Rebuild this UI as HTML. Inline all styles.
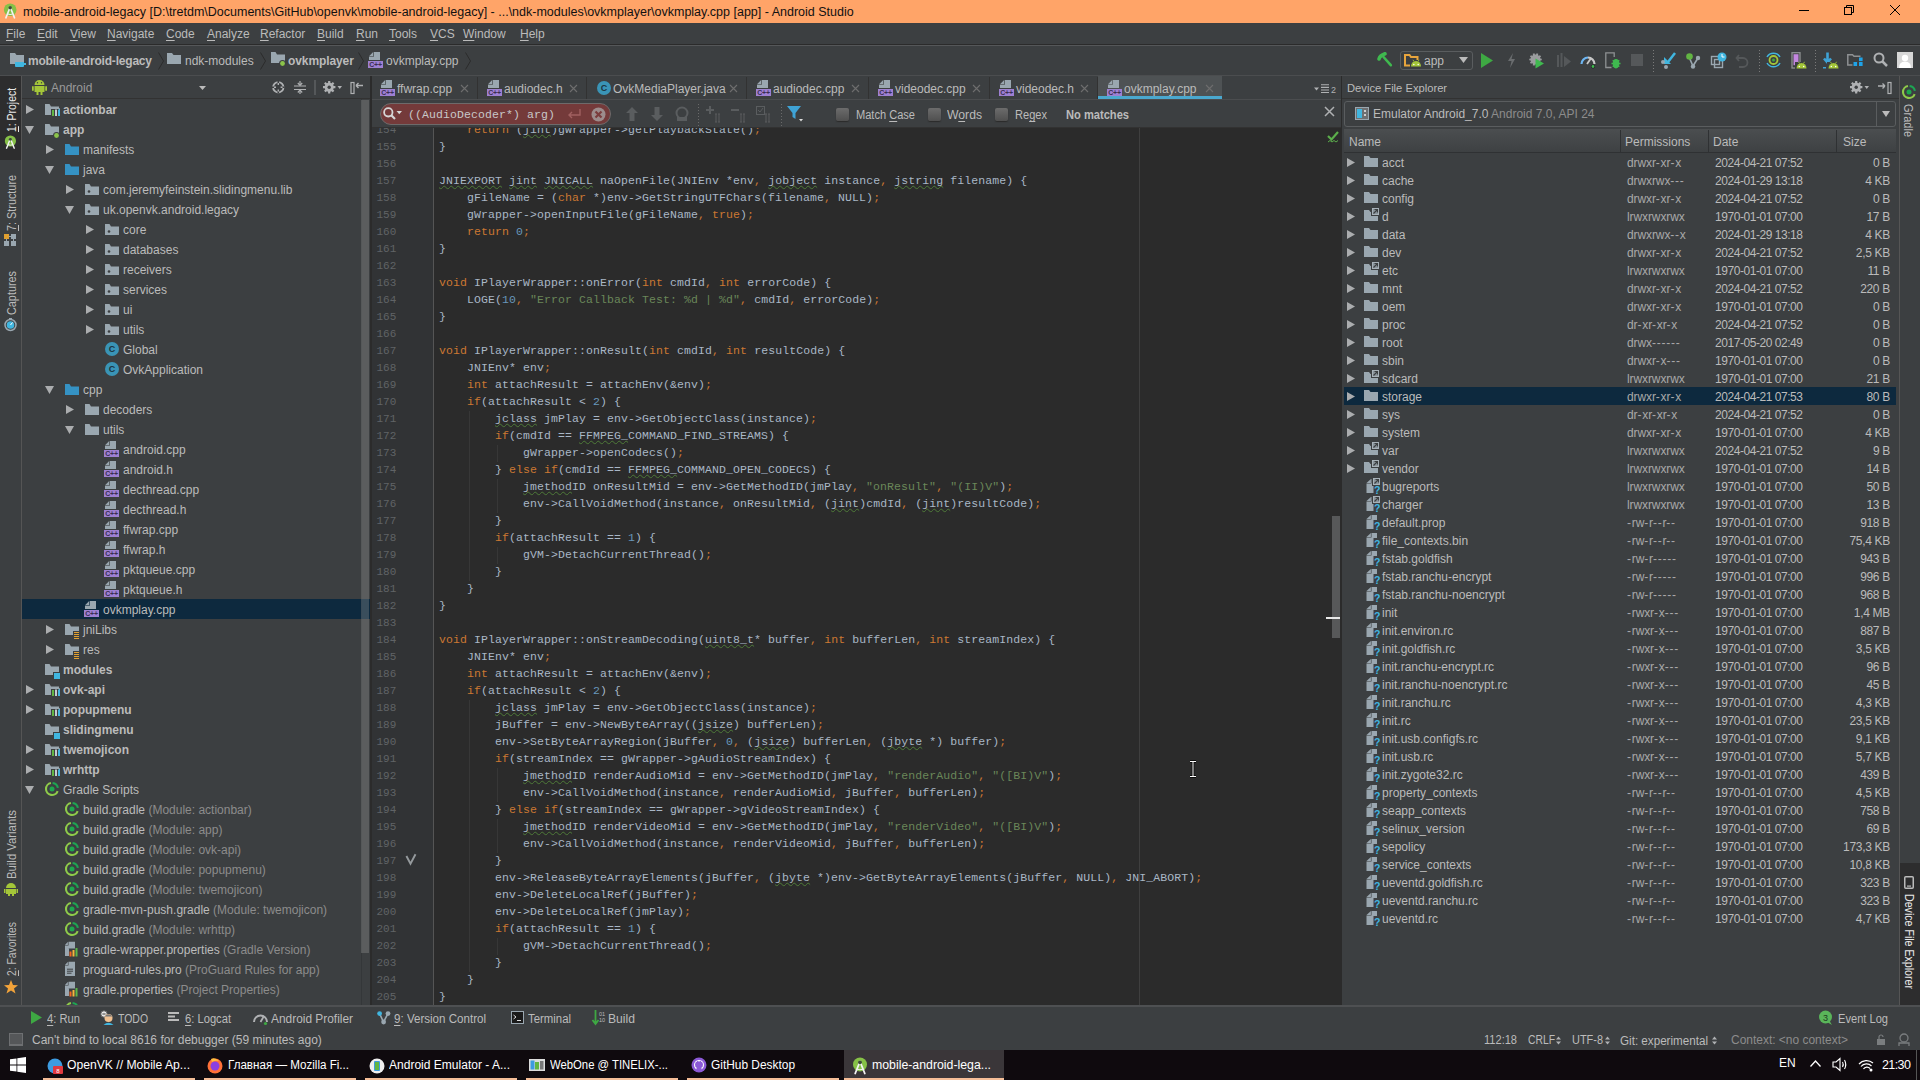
<!DOCTYPE html><html><head><meta charset="utf-8"><title>Android Studio</title><style>
*{box-sizing:border-box;margin:0;padding:0}
html,body{width:1920px;height:1080px;overflow:hidden;background:#3C3F41;font-family:"Liberation Sans",sans-serif;font-size:12px;color:#BBBBBB}
.a{position:absolute}
.t{position:absolute;white-space:nowrap;line-height:14px}
.u{text-decoration:underline;text-underline-offset:2px}
svg{position:absolute;overflow:visible}
</style></head><body>
<div class="a" style="left:0;top:0;width:1920px;height:23px;background:#FFA468"></div>
<svg style="left:3px;top:3px" width="14.4" height="16.2" viewBox="0 0 16 18"><circle cx="8" cy="7.5" r="7" fill="#86C147"/><path d="M8 4.5 L3.2 16.5 M8 4.5 L12.8 16.5" stroke="#F2F2F2" stroke-width="1.8" stroke-linecap="round"/><path d="M5 12 Q8 13.5 11 12" stroke="#F2F2F2" stroke-width="1.2" fill="none"/><circle cx="8" cy="5.3" r="1.9" fill="#3E4A3A"/></svg>
<div class="t" style="left:23px;top:5px;color:#111;font-size:12.5px">mobile-android-legacy [D:\tretdm\Documents\GitHub\openvk\mobile-android-legacy] - ...\ndk-modules\ovkmplayer\ovkmplay.cpp [app] - Android Studio</div>
<div class="a" style="left:1799px;top:10px;width:10px;height:1px;background:#000"></div>
<svg style="left:1844px;top:5px" width="10" height="10" viewBox="0 0 10 10"><rect x="0.5" y="2.5" width="7" height="7" fill="none" stroke="#000"/><path d="M2.5 2.5 V0.5 H9.5 V7.5 H7.5" fill="none" stroke="#000"/></svg>
<svg style="left:1890px;top:5px" width="10" height="10" viewBox="0 0 10 10"><path d="M0 0 L10 10 M10 0 L0 10" stroke="#000" stroke-width="1"/></svg>
<div class="a" style="left:0;top:23px;width:1920px;height:22px;background:#3C3F41;border-bottom:1px solid #2B2B2B"></div>
<div class="t" style="left:6px;top:27px;color:#BBBBBB"><span class="u">F</span>ile</div>
<div class="t" style="left:37px;top:27px;color:#BBBBBB"><span class="u">E</span>dit</div>
<div class="t" style="left:70px;top:27px;color:#BBBBBB"><span class="u">V</span>iew</div>
<div class="t" style="left:107px;top:27px;color:#BBBBBB"><span class="u">N</span>avigate</div>
<div class="t" style="left:166px;top:27px;color:#BBBBBB"><span class="u">C</span>ode</div>
<div class="t" style="left:207px;top:27px;color:#BBBBBB"><span class="u">A</span>nalyze</div>
<div class="t" style="left:260px;top:27px;color:#BBBBBB"><span class="u">R</span>efactor</div>
<div class="t" style="left:317px;top:27px;color:#BBBBBB"><span class="u">B</span>uild</div>
<div class="t" style="left:356px;top:27px;color:#BBBBBB"><span class="u">R</span>un</div>
<div class="t" style="left:389px;top:27px;color:#BBBBBB"><span class="u">T</span>ools</div>
<div class="t" style="left:430px;top:27px;color:#BBBBBB"><span class="u">V</span>CS</div>
<div class="t" style="left:463px;top:27px;color:#BBBBBB"><span class="u">W</span>indow</div>
<div class="t" style="left:520px;top:27px;color:#BBBBBB"><span class="u">H</span>elp</div>
<div class="a" style="left:0;top:45px;width:1920px;height:31px;background:#3C3F41;border-top:1px solid #555759;border-bottom:1px solid #4B4D4F"></div>
<div class="a" style="left:0;top:76px;width:22px;height:930px;background:#3C3F41;border-right:1px solid #555555"></div>
<div class="a" style="left:0;top:76px;width:21px;height:84px;background:#2D2D2E"></div>
<div class="t" style="left:5px;top:131.5px;color:#E8E8E8;font-size:12px;transform-origin:0 0;transform:rotate(-90deg) scaleX(0.8683)"><span class="u">1</span>: Project</div>
<svg style="left:4px;top:135px" width="12.8" height="14.4" viewBox="0 0 16 18"><circle cx="8" cy="7.5" r="7" fill="#86C147"/><path d="M8 4.5 L3.2 16.5 M8 4.5 L12.8 16.5" stroke="#F2F2F2" stroke-width="1.8" stroke-linecap="round"/><path d="M5 12 Q8 13.5 11 12" stroke="#F2F2F2" stroke-width="1.2" fill="none"/><circle cx="8" cy="5.3" r="1.9" fill="#3E4A3A"/></svg>
<div class="t" style="left:5px;top:230.5px;color:#BBBBBB;font-size:12px;transform-origin:0 0;transform:rotate(-90deg) scaleX(0.9032)"><span class="u">7</span>: Structure</div>
<svg style="left:4px;top:234px" width="13" height="12" viewBox="0 0 13 12"><rect x="0" y="0" width="5" height="5" fill="#E0A030"/><rect x="7" y="0" width="5" height="5" fill="#9AA7B0"/><rect x="0" y="7" width="5" height="5" fill="#9AA7B0"/><rect x="7" y="7" width="5" height="5" fill="#9AA7B0"/><path d="M5 2.5 H7 M2.5 5 V7 M9.5 5 V7" stroke="#9AA7B0"/></svg>
<div class="t" style="left:5px;top:314.5px;color:#BBBBBB;font-size:12px;transform-origin:0 0;transform:rotate(-90deg) scaleX(0.9037)">Captures</div>
<svg style="left:4px;top:318px" width="13" height="13" viewBox="0 0 13 13"><circle cx="6.5" cy="7" r="5.5" fill="none" stroke="#9AA7B0" stroke-width="1.5"/><circle cx="6.5" cy="7" r="3.8" fill="#40B6E0"/><path d="M6.5 7 L8.5 4.5" stroke="#fff" stroke-width="1"/><rect x="5" y="0" width="3" height="1.5" fill="#9AA7B0"/></svg>
<div class="t" style="left:5px;top:878.5px;color:#BBBBBB;font-size:12px;transform-origin:0 0;transform:rotate(-90deg) scaleX(0.9434)">Build Variants</div>
<svg style="left:4px;top:882px" width="14" height="14" viewBox="0 0 14 14"><path d="M2 6 A5 5 0 0 1 12 6Z" fill="#A4C639"/><rect x="2" y="7" width="10" height="5" fill="#A4C639"/><rect x="0" y="7" width="1.5" height="4" fill="#A4C639"/><rect x="12.5" y="7" width="1.5" height="4" fill="#A4C639"/><rect x="4" y="12" width="2" height="2" fill="#A4C639"/><rect x="8" y="12" width="2" height="2" fill="#A4C639"/></svg>
<div class="t" style="left:5px;top:975.5px;color:#BBBBBB;font-size:12px;transform-origin:0 0;transform:rotate(-90deg) scaleX(0.8616)"><span class="u">2</span>: Favorites</div>
<svg style="left:4px;top:980px" width="14" height="14" viewBox="0 0 14 14"><path d="M7 0 L9 5 L14 5.2 L10 8.5 L11.5 13.5 L7 10.5 L2.5 13.5 L4 8.5 L0 5.2 L5 5Z" fill="#F2A33A"/></svg>
<div class="a" style="left:1899px;top:76px;width:21px;height:930px;background:#3C3F41;border-left:1px solid #555555"></div>
<div class="a" style="left:1900px;top:863px;width:20px;height:142px;background:#2D2D2E"></div>
<svg style="left:1901px;top:84px" width="16" height="16" viewBox="0 0 16 16"><path d="M8.6 2.03 A6 6 0 0 1 13.9 6.9" fill="none" stroke="#1DA553" stroke-width="2.1"/><path d="M13.64 10.05 A6 6 0 1 1 6.96 2.09" fill="none" stroke="#8FCB4A" stroke-width="2.1"/><circle cx="8" cy="8" r="2.5" fill="#1EA84E"/></svg>
<div class="t" style="left:1915px;top:103.5px;color:#BBBBBB;font-size:12px;transform-origin:0 0;transform:rotate(90deg) scaleX(0.9163)">Gradle</div>
<svg style="left:1904px;top:876px" width="10" height="13" viewBox="0 0 10 13"><rect x="0.75" y="0.75" width="8.5" height="11.5" rx="1" fill="none" stroke="#BBBBBB" stroke-width="1.5"/><rect x="3" y="9.5" width="4" height="1.2" fill="#BBBBBB"/></svg>
<div class="t" style="left:1916px;top:893.5px;color:#E8E8E8;font-size:12px;transform-origin:0 0;transform:rotate(90deg) scaleX(0.8847)">Device File Explorer</div>
<div class="a" style="left:22px;top:76px;width:348px;height:930px;background:#3C3F41"></div>
<div class="a" style="left:22px;top:76px;width:348px;height:23px;background:#3C3F41;border-bottom:1px solid #323232"></div>
<svg style="left:32px;top:79px" width="15" height="16" viewBox="0 0 15 16"><path d="M2.5 6 A5 5 0 0 1 12.5 6Z" fill="#A4C639"/><rect x="2.5" y="7" width="10" height="6" fill="#A4C639"/><rect x="0" y="7" width="1.8" height="5" rx="0.9" fill="#A4C639"/><rect x="13.2" y="7" width="1.8" height="5" rx="0.9" fill="#A4C639"/><rect x="4.5" y="13" width="2" height="3" fill="#A4C639"/><rect x="8.5" y="13" width="2" height="3" fill="#A4C639"/><circle cx="5.5" cy="3.8" r="0.7" fill="#3C3F41"/><circle cx="9.5" cy="3.8" r="0.7" fill="#3C3F41"/></svg>
<div class="t" style="left:51px;top:81px;color:#9A9A9A">Android</div>
<svg style="left:199px;top:86px" width="7" height="4" viewBox="0 0 7 4"><path d="M0 0 H7 L3.5 4Z" fill="#BBBBBB"/></svg>
<svg style="left:272px;top:81px" width="13" height="13" viewBox="0 0 13 13"><circle cx="6.3" cy="6.3" r="5.2" fill="none" stroke="#AFB1B3" stroke-width="1.8"/><path d="M6.3 0 V3 M6.3 9.6 V12.6 M0 6.3 H3 M9.6 6.3 H12.6" stroke="#3C3F41" stroke-width="1.6"/><path d="M6.3 2 V4 M6.3 8.6 V10.6 M2 6.3 H4 M8.6 6.3 H10.6" stroke="#AFB1B3" stroke-width="1.4"/></svg>
<svg style="left:294px;top:81px" width="12" height="13" viewBox="0 0 12 13"><path d="M0 5 H12 M0 8.5 H12" stroke="#AFB1B3" stroke-width="1.2"/><path d="M6 0 V4 M6 9.5 V13" stroke="#AFB1B3" stroke-width="1.2"/><path d="M3.8 2 L6 4.3 L8.2 2 M3.8 11.5 L6 9.2 L8.2 11.5" stroke="#AFB1B3" stroke-width="1.2" fill="none"/></svg>
<div class="a" style="left:314px;top:80px;width:2px;height:15px;background:#55585A"></div>
<svg style="left:323px;top:81px" width="20" height="13" viewBox="0 0 20 13"><path d="M12.41 5.12 L12.41 7.28 L10.66 7.34 L10.16 8.54 L11.35 9.82 L9.82 11.35 L8.54 10.16 L7.34 10.66 L7.28 12.41 L5.12 12.41 L5.06 10.66 L3.86 10.16 L2.58 11.35 L1.05 9.82 L2.24 8.54 L1.74 7.34 L-0.01 7.28 L-0.01 5.12 L1.74 5.06 L2.24 3.86 L1.05 2.58 L2.58 1.05 L3.86 2.24 L5.06 1.74 L5.12 -0.01 L7.28 -0.01 L7.34 1.74 L8.54 2.24 L9.82 1.05 L11.35 2.58 L10.16 3.86 L10.66 5.06Z" fill="#AFB1B3"/><circle cx="6.2" cy="6.2" r="1.7" fill="#3C3F41"/><path d="M14.5 5 H19 L16.75 8Z" fill="#AFB1B3"/></svg>
<svg style="left:350px;top:82px" width="14" height="12" viewBox="0 0 14 12"><rect x="1" y="0.5" width="3" height="11" fill="none" stroke="#AFB1B3" stroke-width="1.2"/><path d="M6 3.5 H13 M6 3.5 L8.5 1 M6 3.5 L8.5 6" stroke="#AFB1B3" stroke-width="1.4" fill="none"/></svg>
<div class="a" style="left:22px;top:99px;width:348px;height:907px;overflow:hidden">
<svg style="left:4px;top:6px" width="8" height="9" viewBox="0 0 8 9"><path d="M0 0 L8 4.5 L0 9Z" fill="#ABADAF"/></svg>
<svg style="left:22px;top:4px" width="16" height="16" viewBox="0 0 16 16"><path d="M1 1 H5.5 L7 3.5 H15 V12 H1Z" fill="#9AA7B0"/><rect x="7" y="5" width="10" height="11" fill="#3C3F41"/><path d="M7 5.5 H15.5 V7" stroke="#9AA7B0" fill="none"/><rect x="8" y="7" width="2" height="6" fill="#62B543"/><rect x="11" y="6.5" width="2" height="6.5" fill="#C5CDD3"/><rect x="14" y="6.5" width="2" height="6.5" fill="#40B6E0"/></svg>
<div class="t" style="left:41px;top:4px;font-weight:bold;color:#BBBBBB">actionbar</div>
<svg style="left:3px;top:27px" width="9" height="8" viewBox="0 0 9 8"><path d="M0 0 L9 0 L4.5 8Z" fill="#ABADAF"/></svg>
<svg style="left:22px;top:24px" width="16" height="16" viewBox="0 0 16 16"><path d="M1 1 H5.5 L7 3.5 H15 V12 H1Z" fill="#9AA7B0"/><circle cx="12.5" cy="12.5" r="3.5" fill="#3C3F41"/><circle cx="12.5" cy="12.5" r="2.4" fill="#8BC34A"/></svg>
<div class="t" style="left:41px;top:24px;font-weight:bold;color:#BBBBBB">app</div>
<svg style="left:24px;top:46px" width="8" height="9" viewBox="0 0 8 9"><path d="M0 0 L8 4.5 L0 9Z" fill="#ABADAF"/></svg>
<svg style="left:42px;top:44px" width="16" height="16" viewBox="0 0 16 16"><path d="M1 1 H5.5 L7 3.5 H15 V12 H1Z" fill="#3592C4"/></svg>
<div class="t" style="left:61px;top:44px;font-weight:normal;color:#BBBBBB">manifests</div>
<svg style="left:23px;top:67px" width="9" height="8" viewBox="0 0 9 8"><path d="M0 0 L9 0 L4.5 8Z" fill="#ABADAF"/></svg>
<svg style="left:42px;top:64px" width="16" height="16" viewBox="0 0 16 16"><path d="M1 1 H5.5 L7 3.5 H15 V12 H1Z" fill="#3592C4"/></svg>
<div class="t" style="left:61px;top:64px;font-weight:normal;color:#BBBBBB">java</div>
<svg style="left:44px;top:86px" width="8" height="9" viewBox="0 0 8 9"><path d="M0 0 L8 4.5 L0 9Z" fill="#ABADAF"/></svg>
<svg style="left:62px;top:84px" width="16" height="16" viewBox="0 0 16 16"><path d="M1 1 H5.5 L7 3.5 H15 V12 H1Z" fill="#9AA7B0"/><circle cx="5" cy="8.5" r="1.3" fill="#3C3F41"/></svg>
<div class="t" style="left:81px;top:84px;font-weight:normal;color:#BBBBBB">com.jeremyfeinstein.slidingmenu.lib</div>
<svg style="left:43px;top:107px" width="9" height="8" viewBox="0 0 9 8"><path d="M0 0 L9 0 L4.5 8Z" fill="#ABADAF"/></svg>
<svg style="left:62px;top:104px" width="16" height="16" viewBox="0 0 16 16"><path d="M1 1 H5.5 L7 3.5 H15 V12 H1Z" fill="#9AA7B0"/><circle cx="5" cy="8.5" r="1.3" fill="#3C3F41"/></svg>
<div class="t" style="left:81px;top:104px;font-weight:normal;color:#BBBBBB">uk.openvk.android.legacy</div>
<svg style="left:64px;top:126px" width="8" height="9" viewBox="0 0 8 9"><path d="M0 0 L8 4.5 L0 9Z" fill="#ABADAF"/></svg>
<svg style="left:82px;top:124px" width="16" height="16" viewBox="0 0 16 16"><path d="M1 1 H5.5 L7 3.5 H15 V12 H1Z" fill="#9AA7B0"/><circle cx="5" cy="8.5" r="1.3" fill="#3C3F41"/></svg>
<div class="t" style="left:101px;top:124px;font-weight:normal;color:#BBBBBB">core</div>
<svg style="left:64px;top:146px" width="8" height="9" viewBox="0 0 8 9"><path d="M0 0 L8 4.5 L0 9Z" fill="#ABADAF"/></svg>
<svg style="left:82px;top:144px" width="16" height="16" viewBox="0 0 16 16"><path d="M1 1 H5.5 L7 3.5 H15 V12 H1Z" fill="#9AA7B0"/><circle cx="5" cy="8.5" r="1.3" fill="#3C3F41"/></svg>
<div class="t" style="left:101px;top:144px;font-weight:normal;color:#BBBBBB">databases</div>
<svg style="left:64px;top:166px" width="8" height="9" viewBox="0 0 8 9"><path d="M0 0 L8 4.5 L0 9Z" fill="#ABADAF"/></svg>
<svg style="left:82px;top:164px" width="16" height="16" viewBox="0 0 16 16"><path d="M1 1 H5.5 L7 3.5 H15 V12 H1Z" fill="#9AA7B0"/><circle cx="5" cy="8.5" r="1.3" fill="#3C3F41"/></svg>
<div class="t" style="left:101px;top:164px;font-weight:normal;color:#BBBBBB">receivers</div>
<svg style="left:64px;top:186px" width="8" height="9" viewBox="0 0 8 9"><path d="M0 0 L8 4.5 L0 9Z" fill="#ABADAF"/></svg>
<svg style="left:82px;top:184px" width="16" height="16" viewBox="0 0 16 16"><path d="M1 1 H5.5 L7 3.5 H15 V12 H1Z" fill="#9AA7B0"/><circle cx="5" cy="8.5" r="1.3" fill="#3C3F41"/></svg>
<div class="t" style="left:101px;top:184px;font-weight:normal;color:#BBBBBB">services</div>
<svg style="left:64px;top:206px" width="8" height="9" viewBox="0 0 8 9"><path d="M0 0 L8 4.5 L0 9Z" fill="#ABADAF"/></svg>
<svg style="left:82px;top:204px" width="16" height="16" viewBox="0 0 16 16"><path d="M1 1 H5.5 L7 3.5 H15 V12 H1Z" fill="#9AA7B0"/><circle cx="5" cy="8.5" r="1.3" fill="#3C3F41"/></svg>
<div class="t" style="left:101px;top:204px;font-weight:normal;color:#BBBBBB">ui</div>
<svg style="left:64px;top:226px" width="8" height="9" viewBox="0 0 8 9"><path d="M0 0 L8 4.5 L0 9Z" fill="#ABADAF"/></svg>
<svg style="left:82px;top:224px" width="16" height="16" viewBox="0 0 16 16"><path d="M1 1 H5.5 L7 3.5 H15 V12 H1Z" fill="#9AA7B0"/><circle cx="5" cy="8.5" r="1.3" fill="#3C3F41"/></svg>
<div class="t" style="left:101px;top:224px;font-weight:normal;color:#BBBBBB">utils</div>
<svg style="left:82px;top:242px" width="16" height="16" viewBox="0 0 16 16"><circle cx="8" cy="8" r="7" fill="#3A94B6"/><text x="8" y="11.4" font-family="Liberation Sans" font-size="9" font-weight="bold" fill="#1C3540" text-anchor="middle">C</text></svg>
<div class="t" style="left:101px;top:244px;font-weight:normal;color:#BBBBBB">Global</div>
<svg style="left:82px;top:262px" width="16" height="16" viewBox="0 0 16 16"><circle cx="8" cy="8" r="7" fill="#3A94B6"/><text x="8" y="11.4" font-family="Liberation Sans" font-size="9" font-weight="bold" fill="#1C3540" text-anchor="middle">C</text></svg>
<div class="t" style="left:101px;top:264px;font-weight:normal;color:#BBBBBB">OvkApplication</div>
<svg style="left:23px;top:287px" width="9" height="8" viewBox="0 0 9 8"><path d="M0 0 L9 0 L4.5 8Z" fill="#ABADAF"/></svg>
<svg style="left:42px;top:284px" width="16" height="16" viewBox="0 0 16 16"><path d="M1 1 H5.5 L7 3.5 H15 V12 H1Z" fill="#3592C4"/></svg>
<div class="t" style="left:61px;top:284px;font-weight:normal;color:#BBBBBB">cpp</div>
<svg style="left:44px;top:306px" width="8" height="9" viewBox="0 0 8 9"><path d="M0 0 L8 4.5 L0 9Z" fill="#ABADAF"/></svg>
<svg style="left:62px;top:304px" width="16" height="16" viewBox="0 0 16 16"><path d="M1 1 H5.5 L7 3.5 H15 V12 H1Z" fill="#9AA7B0"/></svg>
<div class="t" style="left:81px;top:304px;font-weight:normal;color:#BBBBBB">decoders</div>
<svg style="left:43px;top:327px" width="9" height="8" viewBox="0 0 9 8"><path d="M0 0 L9 0 L4.5 8Z" fill="#ABADAF"/></svg>
<svg style="left:62px;top:324px" width="16" height="16" viewBox="0 0 16 16"><path d="M1 1 H5.5 L7 3.5 H15 V12 H1Z" fill="#9AA7B0"/></svg>
<div class="t" style="left:81px;top:324px;font-weight:normal;color:#BBBBBB">utils</div>
<svg style="left:82px;top:342px" width="16" height="16" viewBox="0 0 16 16"><path d="M5.8 0 H12 V8 H1 V4.8 H5.8Z" fill="#9AA7B0"/><path d="M1 4.2 L5.2 0 V4.2Z" fill="#9AA7B0"/><rect x="0" y="9" width="15" height="7" fill="#9E80D2"/><text x="7.6" y="15.2" font-family="Liberation Sans" font-size="7" fill="#3B2E52" text-anchor="middle" font-weight="bold" letter-spacing="-0.2">C++</text></svg>
<div class="t" style="left:101px;top:344px;font-weight:normal;color:#BBBBBB">android.cpp</div>
<svg style="left:82px;top:362px" width="16" height="16" viewBox="0 0 16 16"><path d="M5.8 0 H12 V8 H1 V4.8 H5.8Z" fill="#9AA7B0"/><path d="M1 4.2 L5.2 0 V4.2Z" fill="#9AA7B0"/><rect x="0" y="9" width="15" height="7" fill="#9E80D2"/><text x="7.6" y="15.2" font-family="Liberation Sans" font-size="7" fill="#3B2E52" text-anchor="middle" font-weight="bold" letter-spacing="-0.2">C++</text></svg>
<div class="t" style="left:101px;top:364px;font-weight:normal;color:#BBBBBB">android.h</div>
<svg style="left:82px;top:382px" width="16" height="16" viewBox="0 0 16 16"><path d="M5.8 0 H12 V8 H1 V4.8 H5.8Z" fill="#9AA7B0"/><path d="M1 4.2 L5.2 0 V4.2Z" fill="#9AA7B0"/><rect x="0" y="9" width="15" height="7" fill="#9E80D2"/><text x="7.6" y="15.2" font-family="Liberation Sans" font-size="7" fill="#3B2E52" text-anchor="middle" font-weight="bold" letter-spacing="-0.2">C++</text></svg>
<div class="t" style="left:101px;top:384px;font-weight:normal;color:#BBBBBB">decthread.cpp</div>
<svg style="left:82px;top:402px" width="16" height="16" viewBox="0 0 16 16"><path d="M5.8 0 H12 V8 H1 V4.8 H5.8Z" fill="#9AA7B0"/><path d="M1 4.2 L5.2 0 V4.2Z" fill="#9AA7B0"/><rect x="0" y="9" width="15" height="7" fill="#9E80D2"/><text x="7.6" y="15.2" font-family="Liberation Sans" font-size="7" fill="#3B2E52" text-anchor="middle" font-weight="bold" letter-spacing="-0.2">C++</text></svg>
<div class="t" style="left:101px;top:404px;font-weight:normal;color:#BBBBBB">decthread.h</div>
<svg style="left:82px;top:422px" width="16" height="16" viewBox="0 0 16 16"><path d="M5.8 0 H12 V8 H1 V4.8 H5.8Z" fill="#9AA7B0"/><path d="M1 4.2 L5.2 0 V4.2Z" fill="#9AA7B0"/><rect x="0" y="9" width="15" height="7" fill="#9E80D2"/><text x="7.6" y="15.2" font-family="Liberation Sans" font-size="7" fill="#3B2E52" text-anchor="middle" font-weight="bold" letter-spacing="-0.2">C++</text></svg>
<div class="t" style="left:101px;top:424px;font-weight:normal;color:#BBBBBB">ffwrap.cpp</div>
<svg style="left:82px;top:442px" width="16" height="16" viewBox="0 0 16 16"><path d="M5.8 0 H12 V8 H1 V4.8 H5.8Z" fill="#9AA7B0"/><path d="M1 4.2 L5.2 0 V4.2Z" fill="#9AA7B0"/><rect x="0" y="9" width="15" height="7" fill="#9E80D2"/><text x="7.6" y="15.2" font-family="Liberation Sans" font-size="7" fill="#3B2E52" text-anchor="middle" font-weight="bold" letter-spacing="-0.2">C++</text></svg>
<div class="t" style="left:101px;top:444px;font-weight:normal;color:#BBBBBB">ffwrap.h</div>
<svg style="left:82px;top:462px" width="16" height="16" viewBox="0 0 16 16"><path d="M5.8 0 H12 V8 H1 V4.8 H5.8Z" fill="#9AA7B0"/><path d="M1 4.2 L5.2 0 V4.2Z" fill="#9AA7B0"/><rect x="0" y="9" width="15" height="7" fill="#9E80D2"/><text x="7.6" y="15.2" font-family="Liberation Sans" font-size="7" fill="#3B2E52" text-anchor="middle" font-weight="bold" letter-spacing="-0.2">C++</text></svg>
<div class="t" style="left:101px;top:464px;font-weight:normal;color:#BBBBBB">pktqueue.cpp</div>
<svg style="left:82px;top:482px" width="16" height="16" viewBox="0 0 16 16"><path d="M5.8 0 H12 V8 H1 V4.8 H5.8Z" fill="#9AA7B0"/><path d="M1 4.2 L5.2 0 V4.2Z" fill="#9AA7B0"/><rect x="0" y="9" width="15" height="7" fill="#9E80D2"/><text x="7.6" y="15.2" font-family="Liberation Sans" font-size="7" fill="#3B2E52" text-anchor="middle" font-weight="bold" letter-spacing="-0.2">C++</text></svg>
<div class="t" style="left:101px;top:484px;font-weight:normal;color:#BBBBBB">pktqueue.h</div>
<div class="a" style="left:0;top:500px;width:348px;height:20px;background:#0D293E"></div>
<svg style="left:62px;top:502px" width="16" height="16" viewBox="0 0 16 16"><path d="M5.8 0 H12 V8 H1 V4.8 H5.8Z" fill="#9AA7B0"/><path d="M1 4.2 L5.2 0 V4.2Z" fill="#9AA7B0"/><rect x="0" y="9" width="15" height="7" fill="#9E80D2"/><text x="7.6" y="15.2" font-family="Liberation Sans" font-size="7" fill="#3B2E52" text-anchor="middle" font-weight="bold" letter-spacing="-0.2">C++</text></svg>
<div class="t" style="left:81px;top:504px;font-weight:normal;color:#BBBBBB">ovkmplay.cpp</div>
<svg style="left:24px;top:526px" width="8" height="9" viewBox="0 0 8 9"><path d="M0 0 L8 4.5 L0 9Z" fill="#ABADAF"/></svg>
<svg style="left:42px;top:524px" width="16" height="16" viewBox="0 0 16 16"><path d="M1 1 H5.5 L7 3.5 H15 V12 H1Z" fill="#9AA7B0"/><rect x="9" y="8" width="7" height="8" fill="#3C3F41"/><path d="M10 9.5h5M10 11.5h5M10 13.5h5M10 15.5h5" stroke="#E0A030" stroke-width="1"/></svg>
<div class="t" style="left:61px;top:524px;font-weight:normal;color:#BBBBBB">jniLibs</div>
<svg style="left:24px;top:546px" width="8" height="9" viewBox="0 0 8 9"><path d="M0 0 L8 4.5 L0 9Z" fill="#ABADAF"/></svg>
<svg style="left:42px;top:544px" width="16" height="16" viewBox="0 0 16 16"><path d="M1 1 H5.5 L7 3.5 H15 V12 H1Z" fill="#9AA7B0"/><rect x="9" y="8" width="7" height="8" fill="#3C3F41"/><path d="M10 9.5h5M10 11.5h5M10 13.5h5M10 15.5h5" stroke="#E0A030" stroke-width="1"/></svg>
<div class="t" style="left:61px;top:544px;font-weight:normal;color:#BBBBBB">res</div>
<svg style="left:22px;top:564px" width="16" height="16" viewBox="0 0 16 16"><path d="M1 1 H5.5 L7 3.5 H15 V12 H1Z" fill="#9AA7B0"/><rect x="9" y="9" width="7" height="7" fill="#3C3F41"/><rect x="10" y="10" width="6" height="6" fill="#40B6E0"/></svg>
<div class="t" style="left:41px;top:564px;font-weight:bold;color:#BBBBBB">modules</div>
<svg style="left:4px;top:586px" width="8" height="9" viewBox="0 0 8 9"><path d="M0 0 L8 4.5 L0 9Z" fill="#ABADAF"/></svg>
<svg style="left:22px;top:584px" width="16" height="16" viewBox="0 0 16 16"><path d="M1 1 H5.5 L7 3.5 H15 V12 H1Z" fill="#9AA7B0"/><rect x="7" y="5" width="10" height="11" fill="#3C3F41"/><path d="M7 5.5 H15.5 V7" stroke="#9AA7B0" fill="none"/><rect x="8" y="7" width="2" height="6" fill="#62B543"/><rect x="11" y="6.5" width="2" height="6.5" fill="#C5CDD3"/><rect x="14" y="6.5" width="2" height="6.5" fill="#40B6E0"/></svg>
<div class="t" style="left:41px;top:584px;font-weight:bold;color:#BBBBBB">ovk-api</div>
<svg style="left:4px;top:606px" width="8" height="9" viewBox="0 0 8 9"><path d="M0 0 L8 4.5 L0 9Z" fill="#ABADAF"/></svg>
<svg style="left:22px;top:604px" width="16" height="16" viewBox="0 0 16 16"><path d="M1 1 H5.5 L7 3.5 H15 V12 H1Z" fill="#9AA7B0"/><rect x="7" y="5" width="10" height="11" fill="#3C3F41"/><path d="M7 5.5 H15.5 V7" stroke="#9AA7B0" fill="none"/><rect x="8" y="7" width="2" height="6" fill="#62B543"/><rect x="11" y="6.5" width="2" height="6.5" fill="#C5CDD3"/><rect x="14" y="6.5" width="2" height="6.5" fill="#40B6E0"/></svg>
<div class="t" style="left:41px;top:604px;font-weight:bold;color:#BBBBBB">popupmenu</div>
<svg style="left:22px;top:624px" width="16" height="16" viewBox="0 0 16 16"><path d="M1 1 H5.5 L7 3.5 H15 V12 H1Z" fill="#9AA7B0"/><rect x="9" y="9" width="7" height="7" fill="#3C3F41"/><rect x="10" y="10" width="6" height="6" fill="#40B6E0"/></svg>
<div class="t" style="left:41px;top:624px;font-weight:bold;color:#BBBBBB">slidingmenu</div>
<svg style="left:4px;top:646px" width="8" height="9" viewBox="0 0 8 9"><path d="M0 0 L8 4.5 L0 9Z" fill="#ABADAF"/></svg>
<svg style="left:22px;top:644px" width="16" height="16" viewBox="0 0 16 16"><path d="M1 1 H5.5 L7 3.5 H15 V12 H1Z" fill="#9AA7B0"/><rect x="7" y="5" width="10" height="11" fill="#3C3F41"/><path d="M7 5.5 H15.5 V7" stroke="#9AA7B0" fill="none"/><rect x="8" y="7" width="2" height="6" fill="#62B543"/><rect x="11" y="6.5" width="2" height="6.5" fill="#C5CDD3"/><rect x="14" y="6.5" width="2" height="6.5" fill="#40B6E0"/></svg>
<div class="t" style="left:41px;top:644px;font-weight:bold;color:#BBBBBB">twemojicon</div>
<svg style="left:4px;top:666px" width="8" height="9" viewBox="0 0 8 9"><path d="M0 0 L8 4.5 L0 9Z" fill="#ABADAF"/></svg>
<svg style="left:22px;top:664px" width="16" height="16" viewBox="0 0 16 16"><path d="M1 1 H5.5 L7 3.5 H15 V12 H1Z" fill="#9AA7B0"/><rect x="7" y="5" width="10" height="11" fill="#3C3F41"/><path d="M7 5.5 H15.5 V7" stroke="#9AA7B0" fill="none"/><rect x="8" y="7" width="2" height="6" fill="#62B543"/><rect x="11" y="6.5" width="2" height="6.5" fill="#C5CDD3"/><rect x="14" y="6.5" width="2" height="6.5" fill="#40B6E0"/></svg>
<div class="t" style="left:41px;top:664px;font-weight:bold;color:#BBBBBB">wrhttp</div>
<svg style="left:3px;top:687px" width="9" height="8" viewBox="0 0 9 8"><path d="M0 0 L9 0 L4.5 8Z" fill="#ABADAF"/></svg>
<svg style="left:22px;top:682px" width="16" height="16" viewBox="0 0 16 16"><path d="M8.6 2.03 A6 6 0 0 1 13.9 6.9" fill="none" stroke="#1DA553" stroke-width="2.1"/><path d="M13.64 10.05 A6 6 0 1 1 6.96 2.09" fill="none" stroke="#8FCB4A" stroke-width="2.1"/><circle cx="8" cy="8" r="2.5" fill="#1EA84E"/></svg>
<div class="t" style="left:41px;top:684px;font-weight:normal;color:#BBBBBB">Gradle Scripts</div>
<svg style="left:42px;top:702px" width="16" height="16" viewBox="0 0 16 16"><path d="M8.6 2.03 A6 6 0 0 1 13.9 6.9" fill="none" stroke="#1DA553" stroke-width="2.1"/><path d="M13.64 10.05 A6 6 0 1 1 6.96 2.09" fill="none" stroke="#8FCB4A" stroke-width="2.1"/><circle cx="8" cy="8" r="2.5" fill="#1EA84E"/></svg>
<div class="t" style="left:61px;top:704px;font-weight:normal;color:#BBBBBB">build.gradle <span style="color:#8C8C8C">(Module: actionbar)</span></div>
<svg style="left:42px;top:722px" width="16" height="16" viewBox="0 0 16 16"><path d="M8.6 2.03 A6 6 0 0 1 13.9 6.9" fill="none" stroke="#1DA553" stroke-width="2.1"/><path d="M13.64 10.05 A6 6 0 1 1 6.96 2.09" fill="none" stroke="#8FCB4A" stroke-width="2.1"/><circle cx="8" cy="8" r="2.5" fill="#1EA84E"/></svg>
<div class="t" style="left:61px;top:724px;font-weight:normal;color:#BBBBBB">build.gradle <span style="color:#8C8C8C">(Module: app)</span></div>
<svg style="left:42px;top:742px" width="16" height="16" viewBox="0 0 16 16"><path d="M8.6 2.03 A6 6 0 0 1 13.9 6.9" fill="none" stroke="#1DA553" stroke-width="2.1"/><path d="M13.64 10.05 A6 6 0 1 1 6.96 2.09" fill="none" stroke="#8FCB4A" stroke-width="2.1"/><circle cx="8" cy="8" r="2.5" fill="#1EA84E"/></svg>
<div class="t" style="left:61px;top:744px;font-weight:normal;color:#BBBBBB">build.gradle <span style="color:#8C8C8C">(Module: ovk-api)</span></div>
<svg style="left:42px;top:762px" width="16" height="16" viewBox="0 0 16 16"><path d="M8.6 2.03 A6 6 0 0 1 13.9 6.9" fill="none" stroke="#1DA553" stroke-width="2.1"/><path d="M13.64 10.05 A6 6 0 1 1 6.96 2.09" fill="none" stroke="#8FCB4A" stroke-width="2.1"/><circle cx="8" cy="8" r="2.5" fill="#1EA84E"/></svg>
<div class="t" style="left:61px;top:764px;font-weight:normal;color:#BBBBBB">build.gradle <span style="color:#8C8C8C">(Module: popupmenu)</span></div>
<svg style="left:42px;top:782px" width="16" height="16" viewBox="0 0 16 16"><path d="M8.6 2.03 A6 6 0 0 1 13.9 6.9" fill="none" stroke="#1DA553" stroke-width="2.1"/><path d="M13.64 10.05 A6 6 0 1 1 6.96 2.09" fill="none" stroke="#8FCB4A" stroke-width="2.1"/><circle cx="8" cy="8" r="2.5" fill="#1EA84E"/></svg>
<div class="t" style="left:61px;top:784px;font-weight:normal;color:#BBBBBB">build.gradle <span style="color:#8C8C8C">(Module: twemojicon)</span></div>
<svg style="left:42px;top:802px" width="16" height="16" viewBox="0 0 16 16"><path d="M8.6 2.03 A6 6 0 0 1 13.9 6.9" fill="none" stroke="#1DA553" stroke-width="2.1"/><path d="M13.64 10.05 A6 6 0 1 1 6.96 2.09" fill="none" stroke="#8FCB4A" stroke-width="2.1"/><circle cx="8" cy="8" r="2.5" fill="#1EA84E"/></svg>
<div class="t" style="left:61px;top:804px;font-weight:normal;color:#BBBBBB">gradle-mvn-push.gradle <span style="color:#8C8C8C">(Module: twemojicon)</span></div>
<svg style="left:42px;top:822px" width="16" height="16" viewBox="0 0 16 16"><path d="M8.6 2.03 A6 6 0 0 1 13.9 6.9" fill="none" stroke="#1DA553" stroke-width="2.1"/><path d="M13.64 10.05 A6 6 0 1 1 6.96 2.09" fill="none" stroke="#8FCB4A" stroke-width="2.1"/><circle cx="8" cy="8" r="2.5" fill="#1EA84E"/></svg>
<div class="t" style="left:61px;top:824px;font-weight:normal;color:#BBBBBB">build.gradle <span style="color:#8C8C8C">(Module: wrhttp)</span></div>
<svg style="left:42px;top:842px" width="16" height="16" viewBox="0 0 16 16"><path d="M4.5 0.8 H11 V15 H1 V4.5 H4.5Z" fill="#9AA7B0"/><path d="M1 3.9 L3.9 0.8 V3.9Z" fill="#9AA7B0"/><rect x="4.5" y="7.5" width="12" height="9" fill="#3C3F41"/><rect x="5.5" y="10.5" width="2" height="5" fill="#F26522"/><rect x="8.5" y="9" width="2" height="6.5" fill="#F5B53B"/><rect x="11.5" y="7" width="2" height="8.5" fill="#5DB848"/><path d="M4.5 7.5 V15" stroke="#9AA7B0"/></svg>
<div class="t" style="left:61px;top:844px;font-weight:normal;color:#BBBBBB">gradle-wrapper.properties <span style="color:#8C8C8C">(Gradle Version)</span></div>
<svg style="left:42px;top:862px" width="16" height="16" viewBox="0 0 16 16"><path d="M4.5 0.8 H11 V15 H1 V4.5 H4.5Z" fill="#9AA7B0"/><path d="M1 3.9 L3.9 0.8 V3.9Z" fill="#9AA7B0"/><path d="M3 8.2 H9 M3 10.2 H9 M3 12.2 H7.5" stroke="#3C3F41" stroke-width="1"/></svg>
<div class="t" style="left:61px;top:864px;font-weight:normal;color:#BBBBBB">proguard-rules.pro <span style="color:#8C8C8C">(ProGuard Rules for app)</span></div>
<svg style="left:42px;top:882px" width="16" height="16" viewBox="0 0 16 16"><path d="M4.5 0.8 H11 V15 H1 V4.5 H4.5Z" fill="#9AA7B0"/><path d="M1 3.9 L3.9 0.8 V3.9Z" fill="#9AA7B0"/><rect x="4.5" y="7.5" width="12" height="9" fill="#3C3F41"/><rect x="5.5" y="10.5" width="2" height="5" fill="#F26522"/><rect x="8.5" y="9" width="2" height="6.5" fill="#F5B53B"/><rect x="11.5" y="7" width="2" height="8.5" fill="#5DB848"/><path d="M4.5 7.5 V15" stroke="#9AA7B0"/></svg>
<div class="t" style="left:61px;top:884px;font-weight:normal;color:#BBBBBB">gradle.properties <span style="color:#8C8C8C">(Project Properties)</span></div>
<svg style="left:42px;top:902px" width="16" height="16" viewBox="0 0 16 16"><path d="M8.6 2.03 A6 6 0 0 1 13.9 6.9" fill="none" stroke="#1DA553" stroke-width="2.1"/><path d="M13.64 10.05 A6 6 0 1 1 6.96 2.09" fill="none" stroke="#8FCB4A" stroke-width="2.1"/><circle cx="8" cy="8" r="2.5" fill="#1EA84E"/></svg>
<div class="t" style="left:61px;top:904px;font-weight:normal;color:#BBBBBB">local.properties <span style="color:#8C8C8C">(SDK Location)</span></div>
</div>
<div class="a" style="left:361px;top:99px;width:1px;height:907px;background:rgba(0,0,0,0.12)"></div>
<div class="a" style="left:361px;top:100px;width:8px;height:853px;background:rgba(160,160,160,0.31)"></div>
<div class="a" style="left:370px;top:76px;width:2px;height:930px;background:#2B2B2B"></div>
<div class="a" style="left:372px;top:76px;width:970px;height:24px;background:#3C3F41;border-bottom:1px solid #4B4D4F"></div>
<div class="a" style="left:477px;top:77px;width:1px;height:22px;background:#323232"></div>
<svg style="left:380px;top:80px" width="16" height="16" viewBox="0 0 16 16"><path d="M5.8 0 H12 V8 H1 V4.8 H5.8Z" fill="#9AA7B0"/><path d="M1 4.2 L5.2 0 V4.2Z" fill="#9AA7B0"/><rect x="0" y="9" width="15" height="7" fill="#9E80D2"/><text x="7.6" y="15.2" font-family="Liberation Sans" font-size="7" fill="#3B2E52" text-anchor="middle" font-weight="bold" letter-spacing="-0.2">C++</text></svg>
<div class="t" style="left:397px;top:82px;color:#BBBBBB">ffwrap.cpp</div>
<svg style="left:461px;top:85px" width="7" height="7" viewBox="0 0 7 7"><path d="M0 0 L7 7 M7 0 L0 7" stroke="#6E6E6E" stroke-width="1.1"/></svg>
<div class="a" style="left:586px;top:77px;width:1px;height:22px;background:#323232"></div>
<svg style="left:487px;top:80px" width="16" height="16" viewBox="0 0 16 16"><path d="M5.8 0 H12 V8 H1 V4.8 H5.8Z" fill="#9AA7B0"/><path d="M1 4.2 L5.2 0 V4.2Z" fill="#9AA7B0"/><rect x="0" y="9" width="15" height="7" fill="#9E80D2"/><text x="7.6" y="15.2" font-family="Liberation Sans" font-size="7" fill="#3B2E52" text-anchor="middle" font-weight="bold" letter-spacing="-0.2">C++</text></svg>
<div class="t" style="left:504px;top:82px;color:#BBBBBB">audiodec.h</div>
<svg style="left:570px;top:85px" width="7" height="7" viewBox="0 0 7 7"><path d="M0 0 L7 7 M7 0 L0 7" stroke="#6E6E6E" stroke-width="1.1"/></svg>
<div class="a" style="left:746px;top:77px;width:1px;height:22px;background:#323232"></div>
<svg style="left:596px;top:80px" width="16" height="16" viewBox="0 0 16 16"><circle cx="8" cy="8" r="7" fill="#3A94B6"/><text x="8" y="11.4" font-family="Liberation Sans" font-size="9" font-weight="bold" fill="#1C3540" text-anchor="middle">C</text></svg>
<div class="t" style="left:613px;top:82px;color:#BBBBBB">OvkMediaPlayer.java</div>
<svg style="left:730px;top:85px" width="7" height="7" viewBox="0 0 7 7"><path d="M0 0 L7 7 M7 0 L0 7" stroke="#6E6E6E" stroke-width="1.1"/></svg>
<div class="a" style="left:868px;top:77px;width:1px;height:22px;background:#323232"></div>
<svg style="left:756px;top:80px" width="16" height="16" viewBox="0 0 16 16"><path d="M5.8 0 H12 V8 H1 V4.8 H5.8Z" fill="#9AA7B0"/><path d="M1 4.2 L5.2 0 V4.2Z" fill="#9AA7B0"/><rect x="0" y="9" width="15" height="7" fill="#9E80D2"/><text x="7.6" y="15.2" font-family="Liberation Sans" font-size="7" fill="#3B2E52" text-anchor="middle" font-weight="bold" letter-spacing="-0.2">C++</text></svg>
<div class="t" style="left:773px;top:82px;color:#BBBBBB">audiodec.cpp</div>
<svg style="left:852px;top:85px" width="7" height="7" viewBox="0 0 7 7"><path d="M0 0 L7 7 M7 0 L0 7" stroke="#6E6E6E" stroke-width="1.1"/></svg>
<div class="a" style="left:989px;top:77px;width:1px;height:22px;background:#323232"></div>
<svg style="left:878px;top:80px" width="16" height="16" viewBox="0 0 16 16"><path d="M5.8 0 H12 V8 H1 V4.8 H5.8Z" fill="#9AA7B0"/><path d="M1 4.2 L5.2 0 V4.2Z" fill="#9AA7B0"/><rect x="0" y="9" width="15" height="7" fill="#9E80D2"/><text x="7.6" y="15.2" font-family="Liberation Sans" font-size="7" fill="#3B2E52" text-anchor="middle" font-weight="bold" letter-spacing="-0.2">C++</text></svg>
<div class="t" style="left:895px;top:82px;color:#BBBBBB">videodec.cpp</div>
<svg style="left:973px;top:85px" width="7" height="7" viewBox="0 0 7 7"><path d="M0 0 L7 7 M7 0 L0 7" stroke="#6E6E6E" stroke-width="1.1"/></svg>
<div class="a" style="left:1097px;top:77px;width:1px;height:22px;background:#323232"></div>
<svg style="left:999px;top:80px" width="16" height="16" viewBox="0 0 16 16"><path d="M5.8 0 H12 V8 H1 V4.8 H5.8Z" fill="#9AA7B0"/><path d="M1 4.2 L5.2 0 V4.2Z" fill="#9AA7B0"/><rect x="0" y="9" width="15" height="7" fill="#9E80D2"/><text x="7.6" y="15.2" font-family="Liberation Sans" font-size="7" fill="#3B2E52" text-anchor="middle" font-weight="bold" letter-spacing="-0.2">C++</text></svg>
<div class="t" style="left:1016px;top:82px;color:#BBBBBB">videodec.h</div>
<svg style="left:1081px;top:85px" width="7" height="7" viewBox="0 0 7 7"><path d="M0 0 L7 7 M7 0 L0 7" stroke="#6E6E6E" stroke-width="1.1"/></svg>
<div class="a" style="left:1098px;top:76px;width:124px;height:23px;background:#4E5254"></div>
<div class="a" style="left:1098px;top:96px;width:124px;height:3px;background:#4AA8CF"></div>
<svg style="left:1107px;top:80px" width="16" height="16" viewBox="0 0 16 16"><path d="M5.8 0 H12 V8 H1 V4.8 H5.8Z" fill="#9AA7B0"/><path d="M1 4.2 L5.2 0 V4.2Z" fill="#9AA7B0"/><rect x="0" y="9" width="15" height="7" fill="#9E80D2"/><text x="7.6" y="15.2" font-family="Liberation Sans" font-size="7" fill="#3B2E52" text-anchor="middle" font-weight="bold" letter-spacing="-0.2">C++</text></svg>
<div class="t" style="left:1124px;top:82px;color:#BBBBBB">ovkmplay.cpp</div>
<svg style="left:1206px;top:85px" width="7" height="7" viewBox="0 0 7 7"><path d="M0 0 L7 7 M7 0 L0 7" stroke="#6E6E6E" stroke-width="1.1"/></svg>
<svg style="left:1314px;top:84px" width="22" height="9" viewBox="0 0 22 9"><path d="M0 3.5 H5 L2.5 6.5Z" fill="#AFB1B3"/><path d="M7 0.7 H15 M7 3.4 H15 M7 6 H15 M7 8.5 H15" stroke="#AFB1B3" stroke-width="1.1"/><text x="17" y="8.5" font-family="Liberation Sans" font-size="9" fill="#AFB1B3">2</text></svg>
<div class="a" style="left:372px;top:100px;width:970px;height:28px;background:#3C3F41;border-bottom:1px solid #323232"></div>
<div class="a" style="left:380px;top:103px;width:231px;height:22px;background:#743A3A;border:1px solid #6E6A6A;border-radius:11px"></div>
<svg style="left:383px;top:107px" width="20" height="14" viewBox="0 0 20 14"><circle cx="5.3" cy="5.3" r="4.2" fill="none" stroke="#D6D6D6" stroke-width="1.8"/><path d="M8.3 8.3 L12 12" stroke="#D6D6D6" stroke-width="2.2"/><path d="M13.5 4 H19 L16.25 7.3Z" fill="#D6D6D6"/></svg>
<div class="t" style="left:408px;top:108px;font-family:'Liberation Mono',monospace;font-size:11.5px;letter-spacing:0.1px;color:#C8C8C8">((AudioDecoder*) arg)</div>
<svg style="left:567px;top:108px" width="14" height="12" viewBox="0 0 14 12"><path d="M13 1 V7 H2 M5 4 L2 7 L5 10" stroke="#A06060" stroke-width="1.4" fill="none"/></svg>
<svg style="left:591px;top:107px" width="15" height="15" viewBox="0 0 15 15"><circle cx="7.5" cy="7.5" r="7" fill="#9C8C8C"/><path d="M4.5 4.5 L10.5 10.5 M10.5 4.5 L4.5 10.5" stroke="#7A3D3D" stroke-width="2.2"/></svg>
<svg style="left:626px;top:107px" width="12" height="14" viewBox="0 0 12 14"><path d="M6 0 L12 6 H8.5 V14 H3.5 V6 H0Z" fill="#5A5D5F"/></svg>
<svg style="left:651px;top:107px" width="12" height="14" viewBox="0 0 12 14"><path d="M6 14 L12 8 H8.5 V0 H3.5 V8 H0Z" fill="#5A5D5F"/></svg>
<svg style="left:674px;top:106px" width="16" height="16" viewBox="0 0 16 16"><circle cx="8" cy="7" r="5.5" fill="none" stroke="#5A5D5F" stroke-width="2"/><rect x="3" y="11" width="10" height="4" fill="#5A5D5F"/></svg>
<svg style="left:698px;top:104px" width="1" height="22" viewBox="0 0 1 22"><path d="M0.5 0 V22" stroke="#6A6A6A" stroke-dasharray="1 2"/></svg>
<svg style="left:706px;top:106px" width="16" height="16" viewBox="0 0 16 16"><path d="M4 0 V8 M0 4 H8" stroke="#5A5D5F" stroke-width="2"/><path d="M10 8 V16 M13 8 V16 M9 8 H11 M12 8 H14 M9 16 H11 M12 16 H14" stroke="#5A5D5F" stroke-width="1"/></svg>
<svg style="left:731px;top:106px" width="16" height="16" viewBox="0 0 16 16"><path d="M0 4 H8" stroke="#5A5D5F" stroke-width="2"/><path d="M10 8 V16 M13 8 V16 M9 8 H11 M12 8 H14 M9 16 H11 M12 16 H14" stroke="#5A5D5F" stroke-width="1"/></svg>
<svg style="left:756px;top:106px" width="16" height="16" viewBox="0 0 16 16"><rect x="0.5" y="0.5" width="8" height="8" fill="none" stroke="#5A5D5F"/><path d="M2 4 L4 6 L7 2" stroke="#5A5D5F" fill="none"/><path d="M10 8 V16 M13 8 V16 M9 8 H11 M12 8 H14 M9 16 H11 M12 16 H14" stroke="#5A5D5F" stroke-width="1"/></svg>
<svg style="left:781px;top:104px" width="1" height="22" viewBox="0 0 1 22"><path d="M0.5 0 V22" stroke="#6A6A6A" stroke-dasharray="1 2"/></svg>
<svg style="left:787px;top:106px" width="16" height="16" viewBox="0 0 16 16"><path d="M0 0 H14 L8.5 7 V13 L5.5 11 V7Z" fill="#3FA3D6"/><path d="M12 13 H16 L14 15.5Z" fill="#DDDDDD"/></svg>
<div class="a" style="left:836px;top:108px;width:13px;height:13px;background:linear-gradient(#6C6C6C,#4F4F4F);border-radius:2px;box-shadow:0 1px 1px #2B2B2B"></div>
<div class="t" style="left:856px;top:108px;transform-origin:0 0;transform:scaleX(0.9216);">Match <span class="u">C</span>ase</div>
<div class="a" style="left:928px;top:108px;width:13px;height:13px;background:linear-gradient(#6C6C6C,#4F4F4F);border-radius:2px;box-shadow:0 1px 1px #2B2B2B"></div>
<div class="t" style="left:947px;top:108px;transform-origin:0 0;transform:scaleX(1.0159);">W<span class="u">o</span>rds</div>
<div class="a" style="left:995px;top:108px;width:13px;height:13px;background:linear-gradient(#6C6C6C,#4F4F4F);border-radius:2px;box-shadow:0 1px 1px #2B2B2B"></div>
<div class="t" style="left:1015px;top:108px;transform-origin:0 0;transform:scaleX(0.9225);">Re<span class="u">g</span>ex</div>
<div class="t" style="left:1066px;top:108px;font-weight:bold;transform-origin:0 0;transform:scaleX(0.9263);">No matches</div>
<svg style="left:1325px;top:107px" width="9" height="9" viewBox="0 0 9 9"><path d="M0 0 L9 9 M9 0 L0 9" stroke="#AFB1B3" stroke-width="1.5"/></svg>
<div class="a" style="left:372px;top:128px;width:970px;height:878px;background:#2B2B2B;overflow:hidden" id="ed">
<div class="a" style="left:0;top:0;width:62px;height:878px;background:#313335"></div>
<div class="a" style="left:61px;top:0;width:1px;height:878px;background:#555555"></div>
<div class="a" style="left:767px;top:0;width:1px;height:878px;background:#3F3F3F"></div>
<style>.cl{position:absolute;left:67px;white-space:pre;font-family:"Liberation Mono",monospace;font-size:11.5px;letter-spacing:0.1px;line-height:17px;height:17px;color:#A9B7C6}.k{color:#CC7832}.s{color:#6A8759}.n{color:#6897BB}.c{color:#CC7832}.w{text-decoration:underline wavy #4E7A38;text-decoration-thickness:0.8px;text-underline-offset:1px;text-decoration-skip-ink:none}.ln{position:absolute;left:0;width:24.5px;text-align:right;font-family:"Liberation Mono",monospace;font-size:11px;letter-spacing:0.1px;line-height:17px;color:#606366}</style>
<div class="ln" style="top:-6.5px">154</div>
<div class="cl" style="top:-7.5px">    <span class="k">return</span> (<span class="w">jint</span>)gWrapper-&gt;getPlaybackState()<span class="c">;</span></div>
<div class="ln" style="top:10.5px">155</div>
<div class="cl" style="top:9.5px">}</div>
<div class="ln" style="top:27.5px">156</div>
<div class="cl" style="top:26.5px"></div>
<div class="ln" style="top:44.5px">157</div>
<div class="cl" style="top:43.5px"><span class="w">JNIEXPORT</span> <span class="w">jint</span> <span class="w">JNICALL</span> naOpenFile(JNIEnv *env<span class="c">,</span> <span class="w">jobject</span> instance<span class="c">,</span> <span class="w">jstring</span> filename) {</div>
<div class="ln" style="top:61.5px">158</div>
<div class="cl" style="top:60.5px">    gFileName = (<span class="k">char</span> *)env-&gt;GetStringUTFChars(filename<span class="c">,</span> NULL)<span class="c">;</span></div>
<div class="ln" style="top:78.5px">159</div>
<div class="cl" style="top:77.5px">    gWrapper-&gt;openInputFile(gFileName<span class="c">,</span> <span class="k">true</span>)<span class="c">;</span></div>
<div class="ln" style="top:95.5px">160</div>
<div class="cl" style="top:94.5px">    <span class="k">return</span> <span class="n">0</span><span class="c">;</span></div>
<div class="ln" style="top:112.5px">161</div>
<div class="cl" style="top:111.5px">}</div>
<div class="ln" style="top:129.5px">162</div>
<div class="cl" style="top:128.5px"></div>
<div class="ln" style="top:146.5px">163</div>
<div class="cl" style="top:145.5px"><span class="k">void</span> IPlayerWrapper::onError(<span class="k">int</span> cmdId<span class="c">,</span> <span class="k">int</span> errorCode) {</div>
<div class="ln" style="top:163.5px">164</div>
<div class="cl" style="top:162.5px">    LOGE(<span class="n">10</span><span class="c">,</span> <span class="s">&quot;Error Callback Test: %d | %d&quot;</span><span class="c">,</span> cmdId<span class="c">,</span> errorCode)<span class="c">;</span></div>
<div class="ln" style="top:180.5px">165</div>
<div class="cl" style="top:179.5px">}</div>
<div class="ln" style="top:197.5px">166</div>
<div class="cl" style="top:196.5px"></div>
<div class="ln" style="top:214.5px">167</div>
<div class="cl" style="top:213.5px"><span class="k">void</span> IPlayerWrapper::onResult(<span class="k">int</span> cmdId<span class="c">,</span> <span class="k">int</span> resultCode) {</div>
<div class="ln" style="top:231.5px">168</div>
<div class="cl" style="top:230.5px">    JNIEnv* env<span class="c">;</span></div>
<div class="ln" style="top:248.5px">169</div>
<div class="cl" style="top:247.5px">    <span class="k">int</span> attachResult = attachEnv(&amp;env)<span class="c">;</span></div>
<div class="ln" style="top:265.5px">170</div>
<div class="cl" style="top:264.5px">    <span class="k">if</span>(attachResult &lt; <span class="n">2</span>) {</div>
<div class="ln" style="top:282.5px">171</div>
<div class="cl" style="top:281.5px">        <span class="w">jclass</span> jmPlay = env-&gt;GetObjectClass(instance)<span class="c">;</span></div>
<div class="ln" style="top:299.5px">172</div>
<div class="cl" style="top:298.5px">        <span class="k">if</span>(cmdId == <span class="w">FFMPEG_</span>COMMAND_FIND_STREAMS) {</div>
<div class="ln" style="top:316.5px">173</div>
<div class="cl" style="top:315.5px">            gWrapper-&gt;openCodecs()<span class="c">;</span></div>
<div class="ln" style="top:333.5px">174</div>
<div class="cl" style="top:332.5px">        } <span class="k">else</span> <span class="k">if</span>(cmdId == <span class="w">FFMPEG_</span>COMMAND_OPEN_CODECS) {</div>
<div class="ln" style="top:350.5px">175</div>
<div class="cl" style="top:349.5px">            <span class="w">jmethod</span>ID onResultMid = env-&gt;GetMethodID(jmPlay<span class="c">,</span> <span class="s">&quot;onResult&quot;</span><span class="c">,</span> <span class="s">&quot;(II)V&quot;</span>)<span class="c">;</span></div>
<div class="ln" style="top:367.5px">176</div>
<div class="cl" style="top:366.5px">            env-&gt;CallVoidMethod(instance<span class="c">,</span> onResultMid<span class="c">,</span> (<span class="w">jint</span>)cmdId<span class="c">,</span> (<span class="w">jint</span>)resultCode)<span class="c">;</span></div>
<div class="ln" style="top:384.5px">177</div>
<div class="cl" style="top:383.5px">        }</div>
<div class="ln" style="top:401.5px">178</div>
<div class="cl" style="top:400.5px">        <span class="k">if</span>(attachResult == <span class="n">1</span>) {</div>
<div class="ln" style="top:418.5px">179</div>
<div class="cl" style="top:417.5px">            gVM-&gt;DetachCurrentThread()<span class="c">;</span></div>
<div class="ln" style="top:435.5px">180</div>
<div class="cl" style="top:434.5px">        }</div>
<div class="ln" style="top:452.5px">181</div>
<div class="cl" style="top:451.5px">    }</div>
<div class="ln" style="top:469.5px">182</div>
<div class="cl" style="top:468.5px">}</div>
<div class="ln" style="top:486.5px">183</div>
<div class="cl" style="top:485.5px"></div>
<div class="ln" style="top:503.5px">184</div>
<div class="cl" style="top:502.5px"><span class="k">void</span> IPlayerWrapper::onStreamDecoding(<span class="w">uint8_t</span>* buffer<span class="c">,</span> <span class="k">int</span> bufferLen<span class="c">,</span> <span class="k">int</span> streamIndex) {</div>
<div class="ln" style="top:520.5px">185</div>
<div class="cl" style="top:519.5px">    JNIEnv* env<span class="c">;</span></div>
<div class="ln" style="top:537.5px">186</div>
<div class="cl" style="top:536.5px">    <span class="k">int</span> attachResult = attachEnv(&amp;env)<span class="c">;</span></div>
<div class="ln" style="top:554.5px">187</div>
<div class="cl" style="top:553.5px">    <span class="k">if</span>(attachResult &lt; <span class="n">2</span>) {</div>
<div class="ln" style="top:571.5px">188</div>
<div class="cl" style="top:570.5px">        <span class="w">jclass</span> jmPlay = env-&gt;GetObjectClass(instance)<span class="c">;</span></div>
<div class="ln" style="top:588.5px">189</div>
<div class="cl" style="top:587.5px">        jBuffer = env-&gt;NewByteArray((<span class="w">jsize</span>) bufferLen)<span class="c">;</span></div>
<div class="ln" style="top:605.5px">190</div>
<div class="cl" style="top:604.5px">        env-&gt;SetByteArrayRegion(jBuffer<span class="c">,</span> <span class="n">0</span><span class="c">,</span> (<span class="w">jsize</span>) bufferLen<span class="c">,</span> (<span class="w">jbyte</span> *) buffer)<span class="c">;</span></div>
<div class="ln" style="top:622.5px">191</div>
<div class="cl" style="top:621.5px">        <span class="k">if</span>(streamIndex == gWrapper-&gt;gAudioStreamIndex) {</div>
<div class="ln" style="top:639.5px">192</div>
<div class="cl" style="top:638.5px">            <span class="w">jmethod</span>ID renderAudioMid = env-&gt;GetMethodID(jmPlay<span class="c">,</span> <span class="s">&quot;renderAudio&quot;</span><span class="c">,</span> <span class="s">&quot;([BI)V&quot;</span>)<span class="c">;</span></div>
<div class="ln" style="top:656.5px">193</div>
<div class="cl" style="top:655.5px">            env-&gt;CallVoidMethod(instance<span class="c">,</span> renderAudioMid<span class="c">,</span> jBuffer<span class="c">,</span> bufferLen)<span class="c">;</span></div>
<div class="ln" style="top:673.5px">194</div>
<div class="cl" style="top:672.5px">        } <span class="k">else</span> <span class="k">if</span>(streamIndex == gWrapper-&gt;gVideoStreamIndex) {</div>
<div class="ln" style="top:690.5px">195</div>
<div class="cl" style="top:689.5px">            <span class="w">jmethod</span>ID renderVideoMid = env-&gt;GetMethodID(jmPlay<span class="c">,</span> <span class="s">&quot;renderVideo&quot;</span><span class="c">,</span> <span class="s">&quot;([BI)V&quot;</span>)<span class="c">;</span></div>
<div class="ln" style="top:707.5px">196</div>
<div class="cl" style="top:706.5px">            env-&gt;CallVoidMethod(instance<span class="c">,</span> renderVideoMid<span class="c">,</span> jBuffer<span class="c">,</span> bufferLen)<span class="c">;</span></div>
<div class="ln" style="top:724.5px">197</div>
<div class="cl" style="top:723.5px">        }</div>
<div class="ln" style="top:741.5px">198</div>
<div class="cl" style="top:740.5px">        env-&gt;ReleaseByteArrayElements(jBuffer<span class="c">,</span> (<span class="w">jbyte</span> *)env-&gt;GetByteArrayElements(jBuffer<span class="c">,</span> NULL)<span class="c">,</span> JNI_ABORT)<span class="c">;</span></div>
<div class="ln" style="top:758.5px">199</div>
<div class="cl" style="top:757.5px">        env-&gt;DeleteLocalRef(jBuffer)<span class="c">;</span></div>
<div class="ln" style="top:775.5px">200</div>
<div class="cl" style="top:774.5px">        env-&gt;DeleteLocalRef(jmPlay)<span class="c">;</span></div>
<div class="ln" style="top:792.5px">201</div>
<div class="cl" style="top:791.5px">        <span class="k">if</span>(attachResult == <span class="n">1</span>) {</div>
<div class="ln" style="top:809.5px">202</div>
<div class="cl" style="top:808.5px">            gVM-&gt;DetachCurrentThread()<span class="c">;</span></div>
<div class="ln" style="top:826.5px">203</div>
<div class="cl" style="top:825.5px">        }</div>
<div class="ln" style="top:843.5px">204</div>
<div class="cl" style="top:842.5px">    }</div>
<div class="ln" style="top:860.5px">205</div>
<div class="cl" style="top:859.5px">}</div>
<div class="a" style="left:97px;top:282.5px;width:1px;height:170px;background:#373737"></div>
<div class="a" style="left:125px;top:316.5px;width:1px;height:17px;background:#373737"></div>
<div class="a" style="left:125px;top:350.5px;width:1px;height:34px;background:#373737"></div>
<div class="a" style="left:125px;top:418.5px;width:1px;height:17px;background:#373737"></div>
<div class="a" style="left:97px;top:571.5px;width:1px;height:272px;background:#373737"></div>
<div class="a" style="left:125px;top:639.5px;width:1px;height:34px;background:#373737"></div>
<div class="a" style="left:125px;top:690.5px;width:1px;height:34px;background:#373737"></div>
<div class="a" style="left:125px;top:809.5px;width:1px;height:17px;background:#373737"></div>
<svg style="left:33px;top:725px" width="12" height="12" viewBox="0 0 12 12"><path d="M1.4 3 L5.5 10.7 L10.5 1.3" stroke="#959A9D" stroke-width="1.9" fill="none"/></svg>
<div class="a" style="left:960px;top:388px;width:8px;height:122px;background:#575859"></div>
<div class="a" style="left:954px;top:489px;width:14px;height:2px;background:#E8E8E8"></div>
<svg style="left:955px;top:3px" width="12" height="13" viewBox="0 0 12 13"><path d="M1 5 L4.5 8.5 L11 1" stroke="#5BAE4B" stroke-width="2.2" fill="none"/><path d="M1 11 L3 9.5 L5 11 L7 9.5 L9 11 L11 9.5" stroke="#5BAE4B" stroke-width="1" fill="none"/></svg>
</div>
<svg style="left:1189px;top:761px" width="8" height="16" viewBox="0 0 8 16"><path d="M1 0.5 H7 M4 0.5 V15.5 M1 15.5 H7" stroke="#000" stroke-width="2.5"/><path d="M1 0.5 H7 M4 0.5 V15.5 M1 15.5 H7" stroke="#fff" stroke-width="1"/></svg>
<div class="a" style="left:1341px;top:76px;width:1px;height:930px;background:#2B2B2B"></div>
<div class="a" style="left:1342px;top:76px;width:557px;height:930px;background:#3C3F41"></div>
<div class="a" style="left:1342px;top:76px;width:557px;height:23px;border-bottom:1px solid #323232"></div>
<div class="t" style="left:1347px;top:81px;color:#BBBBBB;font-size:11.2px">Device File Explorer</div>
<svg style="left:1850px;top:81px" width="20" height="13" viewBox="0 0 20 13"><path d="M12.41 5.12 L12.41 7.28 L10.66 7.34 L10.16 8.54 L11.35 9.82 L9.82 11.35 L8.54 10.16 L7.34 10.66 L7.28 12.41 L5.12 12.41 L5.06 10.66 L3.86 10.16 L2.58 11.35 L1.05 9.82 L2.24 8.54 L1.74 7.34 L-0.01 7.28 L-0.01 5.12 L1.74 5.06 L2.24 3.86 L1.05 2.58 L2.58 1.05 L3.86 2.24 L5.06 1.74 L5.12 -0.01 L7.28 -0.01 L7.34 1.74 L8.54 2.24 L9.82 1.05 L11.35 2.58 L10.16 3.86 L10.66 5.06Z" fill="#AFB1B3"/><circle cx="6.2" cy="6.2" r="1.7" fill="#3C3F41"/><path d="M14.5 5 H19 L16.75 8Z" fill="#AFB1B3"/></svg>
<svg style="left:1878px;top:82px" width="14" height="12" viewBox="0 0 14 12"><path d="M0 4 H7 M7 4 L4.5 1.5 M7 4 L4.5 6.5" stroke="#AFB1B3" stroke-width="1.4" fill="none"/><rect x="10" y="0.5" width="3" height="11" fill="none" stroke="#AFB1B3" stroke-width="1.2"/></svg>
<div class="a" style="left:1344px;top:101px;width:552px;height:26px;background:#3C3F41;border:1px solid #5A5D5F;border-radius:3px"></div>
<div class="a" style="left:1876px;top:102px;width:1px;height:24px;background:#5A5D5F"></div>
<svg style="left:1882px;top:111px" width="8" height="6" viewBox="0 0 8 6"><path d="M0 0 H8 L4 6Z" fill="#BBBBBB"/></svg>
<svg style="left:1355px;top:107px" width="14" height="13" viewBox="0 0 14 13"><rect x="0.5" y="0.5" width="13" height="12" fill="#6E7072" stroke="#9AA7B0"/><rect x="2" y="2" width="5" height="9" fill="#40B6E0"/><rect x="9" y="3" width="2" height="2" fill="#CFCFCF"/><rect x="9" y="7" width="2" height="2" fill="#CFCFCF"/></svg>
<div class="t" style="left:1373px;top:107px;color:#BBBBBB">Emulator Android_7.0 <span style="color:#8C8C8C">Android 7.0, API 24</span></div>
<div class="a" style="left:1344px;top:129px;width:552px;height:24px;background:linear-gradient(#4B4E50,#3E4143);border-bottom:1px solid #2F3133"></div>
<div class="a" style="left:1620px;top:130px;width:1px;height:22px;background:#2F3133"></div>
<div class="a" style="left:1708px;top:130px;width:1px;height:22px;background:#2F3133"></div>
<div class="a" style="left:1836px;top:130px;width:1px;height:22px;background:#2F3133"></div>
<div class="t" style="left:1349px;top:135px">Name</div>
<div class="t" style="left:1625px;top:135px">Permissions</div>
<div class="t" style="left:1713px;top:135px">Date</div>
<div class="t" style="left:1843px;top:135px">Size</div>
<svg style="left:1347px;top:158px" width="8" height="9" viewBox="0 0 8 9"><path d="M0 0 L8 4.5 L0 9Z" fill="#ABADAF"/></svg>
<svg style="left:1364px;top:154px" width="15" height="14" viewBox="0 0 15 14"><path d="M0 2 H5 L6.5 4 H14 V13 H0Z" fill="#9AA7B0"/></svg>
<div class="t" style="left:1382px;top:156px;color:#BBBBBB">acct</div>
<div class="t" style="left:1627px;top:156px;color:#A9A9A9;letter-spacing:-0.1px">drwxr<span style="letter-spacing:0.75px">-</span>xr<span style="letter-spacing:0.75px">-</span>x</div>
<div class="t" style="left:1715px;top:156px;color:#BBBBBB;letter-spacing:-0.45px">2024-04-21 07:52</div>
<div class="t" style="right:30px;top:156px;color:#BBBBBB;letter-spacing:-0.3px">0 B</div>
<svg style="left:1347px;top:176px" width="8" height="9" viewBox="0 0 8 9"><path d="M0 0 L8 4.5 L0 9Z" fill="#ABADAF"/></svg>
<svg style="left:1364px;top:172px" width="15" height="14" viewBox="0 0 15 14"><path d="M0 2 H5 L6.5 4 H14 V13 H0Z" fill="#9AA7B0"/></svg>
<div class="t" style="left:1382px;top:174px;color:#BBBBBB">cache</div>
<div class="t" style="left:1627px;top:174px;color:#A9A9A9;letter-spacing:-0.1px">drwxrwx<span style="letter-spacing:0.75px">-</span><span style="letter-spacing:0.75px">-</span><span style="letter-spacing:0.75px">-</span></div>
<div class="t" style="left:1715px;top:174px;color:#BBBBBB;letter-spacing:-0.45px">2024-01-29 13:18</div>
<div class="t" style="right:30px;top:174px;color:#BBBBBB;letter-spacing:-0.3px">4 KB</div>
<svg style="left:1347px;top:194px" width="8" height="9" viewBox="0 0 8 9"><path d="M0 0 L8 4.5 L0 9Z" fill="#ABADAF"/></svg>
<svg style="left:1364px;top:190px" width="15" height="14" viewBox="0 0 15 14"><path d="M0 2 H5 L6.5 4 H14 V13 H0Z" fill="#9AA7B0"/></svg>
<div class="t" style="left:1382px;top:192px;color:#BBBBBB">config</div>
<div class="t" style="left:1627px;top:192px;color:#A9A9A9;letter-spacing:-0.1px">drwxr<span style="letter-spacing:0.75px">-</span>xr<span style="letter-spacing:0.75px">-</span>x</div>
<div class="t" style="left:1715px;top:192px;color:#BBBBBB;letter-spacing:-0.45px">2024-04-21 07:52</div>
<div class="t" style="right:30px;top:192px;color:#BBBBBB;letter-spacing:-0.3px">0 B</div>
<svg style="left:1347px;top:212px" width="8" height="9" viewBox="0 0 8 9"><path d="M0 0 L8 4.5 L0 9Z" fill="#ABADAF"/></svg>
<svg style="left:1364px;top:208px" width="15" height="14" viewBox="0 0 15 14"><path d="M0 2 H5 L6.5 4 H14 V13 H0Z" fill="#9AA7B0"/><rect x="7" y="-1" width="9" height="9" fill="#3C3F41"/><rect x="8" y="0" width="7" height="7" fill="#A7B1B8"/><rect x="9" y="1" width="5" height="5" fill="#8A949B"/><path d="M9.5 5.5 L13.5 1.5 M10.5 1.5 H13.5 V4.5" stroke="#3C3F41" stroke-width="1.1" fill="none"/></svg>
<div class="t" style="left:1382px;top:210px;color:#BBBBBB">d</div>
<div class="t" style="left:1627px;top:210px;color:#A9A9A9;letter-spacing:-0.1px">lrwxrwxrwx</div>
<div class="t" style="left:1715px;top:210px;color:#BBBBBB;letter-spacing:-0.45px">1970-01-01 07:00</div>
<div class="t" style="right:30px;top:210px;color:#BBBBBB;letter-spacing:-0.3px">17 B</div>
<svg style="left:1347px;top:230px" width="8" height="9" viewBox="0 0 8 9"><path d="M0 0 L8 4.5 L0 9Z" fill="#ABADAF"/></svg>
<svg style="left:1364px;top:226px" width="15" height="14" viewBox="0 0 15 14"><path d="M0 2 H5 L6.5 4 H14 V13 H0Z" fill="#9AA7B0"/></svg>
<div class="t" style="left:1382px;top:228px;color:#BBBBBB">data</div>
<div class="t" style="left:1627px;top:228px;color:#A9A9A9;letter-spacing:-0.1px">drwxrwx<span style="letter-spacing:0.75px">-</span><span style="letter-spacing:0.75px">-</span>x</div>
<div class="t" style="left:1715px;top:228px;color:#BBBBBB;letter-spacing:-0.45px">2024-01-29 13:18</div>
<div class="t" style="right:30px;top:228px;color:#BBBBBB;letter-spacing:-0.3px">4 KB</div>
<svg style="left:1347px;top:248px" width="8" height="9" viewBox="0 0 8 9"><path d="M0 0 L8 4.5 L0 9Z" fill="#ABADAF"/></svg>
<svg style="left:1364px;top:244px" width="15" height="14" viewBox="0 0 15 14"><path d="M0 2 H5 L6.5 4 H14 V13 H0Z" fill="#9AA7B0"/></svg>
<div class="t" style="left:1382px;top:246px;color:#BBBBBB">dev</div>
<div class="t" style="left:1627px;top:246px;color:#A9A9A9;letter-spacing:-0.1px">drwxr<span style="letter-spacing:0.75px">-</span>xr<span style="letter-spacing:0.75px">-</span>x</div>
<div class="t" style="left:1715px;top:246px;color:#BBBBBB;letter-spacing:-0.45px">2024-04-21 07:52</div>
<div class="t" style="right:30px;top:246px;color:#BBBBBB;letter-spacing:-0.3px">2,5 KB</div>
<svg style="left:1347px;top:266px" width="8" height="9" viewBox="0 0 8 9"><path d="M0 0 L8 4.5 L0 9Z" fill="#ABADAF"/></svg>
<svg style="left:1364px;top:262px" width="15" height="14" viewBox="0 0 15 14"><path d="M0 2 H5 L6.5 4 H14 V13 H0Z" fill="#9AA7B0"/><rect x="7" y="-1" width="9" height="9" fill="#3C3F41"/><rect x="8" y="0" width="7" height="7" fill="#A7B1B8"/><rect x="9" y="1" width="5" height="5" fill="#8A949B"/><path d="M9.5 5.5 L13.5 1.5 M10.5 1.5 H13.5 V4.5" stroke="#3C3F41" stroke-width="1.1" fill="none"/></svg>
<div class="t" style="left:1382px;top:264px;color:#BBBBBB">etc</div>
<div class="t" style="left:1627px;top:264px;color:#A9A9A9;letter-spacing:-0.1px">lrwxrwxrwx</div>
<div class="t" style="left:1715px;top:264px;color:#BBBBBB;letter-spacing:-0.45px">1970-01-01 07:00</div>
<div class="t" style="right:30px;top:264px;color:#BBBBBB;letter-spacing:-0.3px">11 B</div>
<svg style="left:1347px;top:284px" width="8" height="9" viewBox="0 0 8 9"><path d="M0 0 L8 4.5 L0 9Z" fill="#ABADAF"/></svg>
<svg style="left:1364px;top:280px" width="15" height="14" viewBox="0 0 15 14"><path d="M0 2 H5 L6.5 4 H14 V13 H0Z" fill="#9AA7B0"/></svg>
<div class="t" style="left:1382px;top:282px;color:#BBBBBB">mnt</div>
<div class="t" style="left:1627px;top:282px;color:#A9A9A9;letter-spacing:-0.1px">drwxr<span style="letter-spacing:0.75px">-</span>xr<span style="letter-spacing:0.75px">-</span>x</div>
<div class="t" style="left:1715px;top:282px;color:#BBBBBB;letter-spacing:-0.45px">2024-04-21 07:52</div>
<div class="t" style="right:30px;top:282px;color:#BBBBBB;letter-spacing:-0.3px">220 B</div>
<svg style="left:1347px;top:302px" width="8" height="9" viewBox="0 0 8 9"><path d="M0 0 L8 4.5 L0 9Z" fill="#ABADAF"/></svg>
<svg style="left:1364px;top:298px" width="15" height="14" viewBox="0 0 15 14"><path d="M0 2 H5 L6.5 4 H14 V13 H0Z" fill="#9AA7B0"/></svg>
<div class="t" style="left:1382px;top:300px;color:#BBBBBB">oem</div>
<div class="t" style="left:1627px;top:300px;color:#A9A9A9;letter-spacing:-0.1px">drwxr<span style="letter-spacing:0.75px">-</span>xr<span style="letter-spacing:0.75px">-</span>x</div>
<div class="t" style="left:1715px;top:300px;color:#BBBBBB;letter-spacing:-0.45px">1970-01-01 07:00</div>
<div class="t" style="right:30px;top:300px;color:#BBBBBB;letter-spacing:-0.3px">0 B</div>
<svg style="left:1347px;top:320px" width="8" height="9" viewBox="0 0 8 9"><path d="M0 0 L8 4.5 L0 9Z" fill="#ABADAF"/></svg>
<svg style="left:1364px;top:316px" width="15" height="14" viewBox="0 0 15 14"><path d="M0 2 H5 L6.5 4 H14 V13 H0Z" fill="#9AA7B0"/></svg>
<div class="t" style="left:1382px;top:318px;color:#BBBBBB">proc</div>
<div class="t" style="left:1627px;top:318px;color:#A9A9A9;letter-spacing:-0.1px">dr<span style="letter-spacing:0.75px">-</span>xr<span style="letter-spacing:0.75px">-</span>xr<span style="letter-spacing:0.75px">-</span>x</div>
<div class="t" style="left:1715px;top:318px;color:#BBBBBB;letter-spacing:-0.45px">2024-04-21 07:52</div>
<div class="t" style="right:30px;top:318px;color:#BBBBBB;letter-spacing:-0.3px">0 B</div>
<svg style="left:1347px;top:338px" width="8" height="9" viewBox="0 0 8 9"><path d="M0 0 L8 4.5 L0 9Z" fill="#ABADAF"/></svg>
<svg style="left:1364px;top:334px" width="15" height="14" viewBox="0 0 15 14"><path d="M0 2 H5 L6.5 4 H14 V13 H0Z" fill="#9AA7B0"/></svg>
<div class="t" style="left:1382px;top:336px;color:#BBBBBB">root</div>
<div class="t" style="left:1627px;top:336px;color:#A9A9A9;letter-spacing:-0.1px">drwx<span style="letter-spacing:0.75px">-</span><span style="letter-spacing:0.75px">-</span><span style="letter-spacing:0.75px">-</span><span style="letter-spacing:0.75px">-</span><span style="letter-spacing:0.75px">-</span><span style="letter-spacing:0.75px">-</span></div>
<div class="t" style="left:1715px;top:336px;color:#BBBBBB;letter-spacing:-0.45px">2017-05-20 02:49</div>
<div class="t" style="right:30px;top:336px;color:#BBBBBB;letter-spacing:-0.3px">0 B</div>
<svg style="left:1347px;top:356px" width="8" height="9" viewBox="0 0 8 9"><path d="M0 0 L8 4.5 L0 9Z" fill="#ABADAF"/></svg>
<svg style="left:1364px;top:352px" width="15" height="14" viewBox="0 0 15 14"><path d="M0 2 H5 L6.5 4 H14 V13 H0Z" fill="#9AA7B0"/></svg>
<div class="t" style="left:1382px;top:354px;color:#BBBBBB">sbin</div>
<div class="t" style="left:1627px;top:354px;color:#A9A9A9;letter-spacing:-0.1px">drwxr<span style="letter-spacing:0.75px">-</span>x<span style="letter-spacing:0.75px">-</span><span style="letter-spacing:0.75px">-</span><span style="letter-spacing:0.75px">-</span></div>
<div class="t" style="left:1715px;top:354px;color:#BBBBBB;letter-spacing:-0.45px">1970-01-01 07:00</div>
<div class="t" style="right:30px;top:354px;color:#BBBBBB;letter-spacing:-0.3px">0 B</div>
<svg style="left:1347px;top:374px" width="8" height="9" viewBox="0 0 8 9"><path d="M0 0 L8 4.5 L0 9Z" fill="#ABADAF"/></svg>
<svg style="left:1364px;top:370px" width="15" height="14" viewBox="0 0 15 14"><path d="M0 2 H5 L6.5 4 H14 V13 H0Z" fill="#9AA7B0"/><rect x="7" y="-1" width="9" height="9" fill="#3C3F41"/><rect x="8" y="0" width="7" height="7" fill="#A7B1B8"/><rect x="9" y="1" width="5" height="5" fill="#8A949B"/><path d="M9.5 5.5 L13.5 1.5 M10.5 1.5 H13.5 V4.5" stroke="#3C3F41" stroke-width="1.1" fill="none"/></svg>
<div class="t" style="left:1382px;top:372px;color:#BBBBBB">sdcard</div>
<div class="t" style="left:1627px;top:372px;color:#A9A9A9;letter-spacing:-0.1px">lrwxrwxrwx</div>
<div class="t" style="left:1715px;top:372px;color:#BBBBBB;letter-spacing:-0.45px">1970-01-01 07:00</div>
<div class="t" style="right:30px;top:372px;color:#BBBBBB;letter-spacing:-0.3px">21 B</div>
<div class="a" style="left:1344px;top:387px;width:552px;height:18px;background:#0D293E"></div>
<svg style="left:1347px;top:392px" width="8" height="9" viewBox="0 0 8 9"><path d="M0 0 L8 4.5 L0 9Z" fill="#ABADAF"/></svg>
<svg style="left:1364px;top:388px" width="15" height="14" viewBox="0 0 15 14"><path d="M0 2 H5 L6.5 4 H14 V13 H0Z" fill="#9AA7B0"/></svg>
<div class="t" style="left:1382px;top:390px;color:#BBBBBB">storage</div>
<div class="t" style="left:1627px;top:390px;color:#A9A9A9;letter-spacing:-0.1px">drwxr<span style="letter-spacing:0.75px">-</span>xr<span style="letter-spacing:0.75px">-</span>x</div>
<div class="t" style="left:1715px;top:390px;color:#BBBBBB;letter-spacing:-0.45px">2024-04-21 07:53</div>
<div class="t" style="right:30px;top:390px;color:#BBBBBB;letter-spacing:-0.3px">80 B</div>
<svg style="left:1347px;top:410px" width="8" height="9" viewBox="0 0 8 9"><path d="M0 0 L8 4.5 L0 9Z" fill="#ABADAF"/></svg>
<svg style="left:1364px;top:406px" width="15" height="14" viewBox="0 0 15 14"><path d="M0 2 H5 L6.5 4 H14 V13 H0Z" fill="#9AA7B0"/></svg>
<div class="t" style="left:1382px;top:408px;color:#BBBBBB">sys</div>
<div class="t" style="left:1627px;top:408px;color:#A9A9A9;letter-spacing:-0.1px">dr<span style="letter-spacing:0.75px">-</span>xr<span style="letter-spacing:0.75px">-</span>xr<span style="letter-spacing:0.75px">-</span>x</div>
<div class="t" style="left:1715px;top:408px;color:#BBBBBB;letter-spacing:-0.45px">2024-04-21 07:52</div>
<div class="t" style="right:30px;top:408px;color:#BBBBBB;letter-spacing:-0.3px">0 B</div>
<svg style="left:1347px;top:428px" width="8" height="9" viewBox="0 0 8 9"><path d="M0 0 L8 4.5 L0 9Z" fill="#ABADAF"/></svg>
<svg style="left:1364px;top:424px" width="15" height="14" viewBox="0 0 15 14"><path d="M0 2 H5 L6.5 4 H14 V13 H0Z" fill="#9AA7B0"/></svg>
<div class="t" style="left:1382px;top:426px;color:#BBBBBB">system</div>
<div class="t" style="left:1627px;top:426px;color:#A9A9A9;letter-spacing:-0.1px">drwxr<span style="letter-spacing:0.75px">-</span>xr<span style="letter-spacing:0.75px">-</span>x</div>
<div class="t" style="left:1715px;top:426px;color:#BBBBBB;letter-spacing:-0.45px">1970-01-01 07:00</div>
<div class="t" style="right:30px;top:426px;color:#BBBBBB;letter-spacing:-0.3px">4 KB</div>
<svg style="left:1347px;top:446px" width="8" height="9" viewBox="0 0 8 9"><path d="M0 0 L8 4.5 L0 9Z" fill="#ABADAF"/></svg>
<svg style="left:1364px;top:442px" width="15" height="14" viewBox="0 0 15 14"><path d="M0 2 H5 L6.5 4 H14 V13 H0Z" fill="#9AA7B0"/><rect x="7" y="-1" width="9" height="9" fill="#3C3F41"/><rect x="8" y="0" width="7" height="7" fill="#A7B1B8"/><rect x="9" y="1" width="5" height="5" fill="#8A949B"/><path d="M9.5 5.5 L13.5 1.5 M10.5 1.5 H13.5 V4.5" stroke="#3C3F41" stroke-width="1.1" fill="none"/></svg>
<div class="t" style="left:1382px;top:444px;color:#BBBBBB">var</div>
<div class="t" style="left:1627px;top:444px;color:#A9A9A9;letter-spacing:-0.1px">lrwxrwxrwx</div>
<div class="t" style="left:1715px;top:444px;color:#BBBBBB;letter-spacing:-0.45px">2024-04-21 07:52</div>
<div class="t" style="right:30px;top:444px;color:#BBBBBB;letter-spacing:-0.3px">9 B</div>
<svg style="left:1347px;top:464px" width="8" height="9" viewBox="0 0 8 9"><path d="M0 0 L8 4.5 L0 9Z" fill="#ABADAF"/></svg>
<svg style="left:1364px;top:460px" width="15" height="14" viewBox="0 0 15 14"><path d="M0 2 H5 L6.5 4 H14 V13 H0Z" fill="#9AA7B0"/><rect x="7" y="-1" width="9" height="9" fill="#3C3F41"/><rect x="8" y="0" width="7" height="7" fill="#A7B1B8"/><rect x="9" y="1" width="5" height="5" fill="#8A949B"/><path d="M9.5 5.5 L13.5 1.5 M10.5 1.5 H13.5 V4.5" stroke="#3C3F41" stroke-width="1.1" fill="none"/></svg>
<div class="t" style="left:1382px;top:462px;color:#BBBBBB">vendor</div>
<div class="t" style="left:1627px;top:462px;color:#A9A9A9;letter-spacing:-0.1px">lrwxrwxrwx</div>
<div class="t" style="left:1715px;top:462px;color:#BBBBBB;letter-spacing:-0.45px">1970-01-01 07:00</div>
<div class="t" style="right:30px;top:462px;color:#BBBBBB;letter-spacing:-0.3px">14 B</div>
<svg style="left:1366px;top:479px" width="16" height="16" viewBox="0 0 16 16"><path d="M5.5 0 H11 V14 H0.5 V4.5 H5.5Z" fill="#9AA7B0"/><path d="M0.5 3.9 L4.9 0 V3.9Z" fill="#9AA7B0"/><rect x="7.5" y="5" width="8" height="11" fill="#3C3F41"/><text x="11.3" y="14.6" font-family="Liberation Sans" font-size="10.5" font-weight="bold" fill="#40B6E0" text-anchor="middle">?</text><rect x="6" y="-2" width="9" height="9" fill="#3C3F41"/><rect x="7" y="-1" width="7" height="7" fill="#A7B1B8"/><rect x="8" y="0" width="5" height="5" fill="#8A949B"/><path d="M8.5 4.5 L12.5 0.5 M9.5 0.5 H12.5 V3.5" stroke="#3C3F41" stroke-width="1.1" fill="none"/></svg>
<div class="t" style="left:1382px;top:480px;color:#BBBBBB">bugreports</div>
<div class="t" style="left:1627px;top:480px;color:#A9A9A9;letter-spacing:-0.1px">lrwxrwxrwx</div>
<div class="t" style="left:1715px;top:480px;color:#BBBBBB;letter-spacing:-0.45px">1970-01-01 07:00</div>
<div class="t" style="right:30px;top:480px;color:#BBBBBB;letter-spacing:-0.3px">50 B</div>
<svg style="left:1366px;top:497px" width="16" height="16" viewBox="0 0 16 16"><path d="M5.5 0 H11 V14 H0.5 V4.5 H5.5Z" fill="#9AA7B0"/><path d="M0.5 3.9 L4.9 0 V3.9Z" fill="#9AA7B0"/><rect x="7.5" y="5" width="8" height="11" fill="#3C3F41"/><text x="11.3" y="14.6" font-family="Liberation Sans" font-size="10.5" font-weight="bold" fill="#40B6E0" text-anchor="middle">?</text><rect x="6" y="-2" width="9" height="9" fill="#3C3F41"/><rect x="7" y="-1" width="7" height="7" fill="#A7B1B8"/><rect x="8" y="0" width="5" height="5" fill="#8A949B"/><path d="M8.5 4.5 L12.5 0.5 M9.5 0.5 H12.5 V3.5" stroke="#3C3F41" stroke-width="1.1" fill="none"/></svg>
<div class="t" style="left:1382px;top:498px;color:#BBBBBB">charger</div>
<div class="t" style="left:1627px;top:498px;color:#A9A9A9;letter-spacing:-0.1px">lrwxrwxrwx</div>
<div class="t" style="left:1715px;top:498px;color:#BBBBBB;letter-spacing:-0.45px">1970-01-01 07:00</div>
<div class="t" style="right:30px;top:498px;color:#BBBBBB;letter-spacing:-0.3px">13 B</div>
<svg style="left:1366px;top:515px" width="16" height="16" viewBox="0 0 16 16"><path d="M5.5 0 H11 V14 H0.5 V4.5 H5.5Z" fill="#9AA7B0"/><path d="M0.5 3.9 L4.9 0 V3.9Z" fill="#9AA7B0"/><rect x="7.5" y="5" width="8" height="11" fill="#3C3F41"/><text x="11.3" y="14.6" font-family="Liberation Sans" font-size="10.5" font-weight="bold" fill="#40B6E0" text-anchor="middle">?</text></svg>
<div class="t" style="left:1382px;top:516px;color:#BBBBBB">default.prop</div>
<div class="t" style="left:1627px;top:516px;color:#A9A9A9;letter-spacing:-0.1px"><span style="letter-spacing:0.75px">-</span>rw<span style="letter-spacing:0.75px">-</span>r<span style="letter-spacing:0.75px">-</span><span style="letter-spacing:0.75px">-</span>r<span style="letter-spacing:0.75px">-</span><span style="letter-spacing:0.75px">-</span></div>
<div class="t" style="left:1715px;top:516px;color:#BBBBBB;letter-spacing:-0.45px">1970-01-01 07:00</div>
<div class="t" style="right:30px;top:516px;color:#BBBBBB;letter-spacing:-0.3px">918 B</div>
<svg style="left:1366px;top:533px" width="16" height="16" viewBox="0 0 16 16"><path d="M5.5 0 H11 V14 H0.5 V4.5 H5.5Z" fill="#9AA7B0"/><path d="M0.5 3.9 L4.9 0 V3.9Z" fill="#9AA7B0"/><rect x="7.5" y="5" width="8" height="11" fill="#3C3F41"/><text x="11.3" y="14.6" font-family="Liberation Sans" font-size="10.5" font-weight="bold" fill="#40B6E0" text-anchor="middle">?</text></svg>
<div class="t" style="left:1382px;top:534px;color:#BBBBBB">file_contexts.bin</div>
<div class="t" style="left:1627px;top:534px;color:#A9A9A9;letter-spacing:-0.1px"><span style="letter-spacing:0.75px">-</span>rw<span style="letter-spacing:0.75px">-</span>r<span style="letter-spacing:0.75px">-</span><span style="letter-spacing:0.75px">-</span>r<span style="letter-spacing:0.75px">-</span><span style="letter-spacing:0.75px">-</span></div>
<div class="t" style="left:1715px;top:534px;color:#BBBBBB;letter-spacing:-0.45px">1970-01-01 07:00</div>
<div class="t" style="right:30px;top:534px;color:#BBBBBB;letter-spacing:-0.3px">75,4 KB</div>
<svg style="left:1366px;top:551px" width="16" height="16" viewBox="0 0 16 16"><path d="M5.5 0 H11 V14 H0.5 V4.5 H5.5Z" fill="#9AA7B0"/><path d="M0.5 3.9 L4.9 0 V3.9Z" fill="#9AA7B0"/><rect x="7.5" y="5" width="8" height="11" fill="#3C3F41"/><text x="11.3" y="14.6" font-family="Liberation Sans" font-size="10.5" font-weight="bold" fill="#40B6E0" text-anchor="middle">?</text></svg>
<div class="t" style="left:1382px;top:552px;color:#BBBBBB">fstab.goldfish</div>
<div class="t" style="left:1627px;top:552px;color:#A9A9A9;letter-spacing:-0.1px"><span style="letter-spacing:0.75px">-</span>rw<span style="letter-spacing:0.75px">-</span>r<span style="letter-spacing:0.75px">-</span><span style="letter-spacing:0.75px">-</span><span style="letter-spacing:0.75px">-</span><span style="letter-spacing:0.75px">-</span><span style="letter-spacing:0.75px">-</span></div>
<div class="t" style="left:1715px;top:552px;color:#BBBBBB;letter-spacing:-0.45px">1970-01-01 07:00</div>
<div class="t" style="right:30px;top:552px;color:#BBBBBB;letter-spacing:-0.3px">943 B</div>
<svg style="left:1366px;top:569px" width="16" height="16" viewBox="0 0 16 16"><path d="M5.5 0 H11 V14 H0.5 V4.5 H5.5Z" fill="#9AA7B0"/><path d="M0.5 3.9 L4.9 0 V3.9Z" fill="#9AA7B0"/><rect x="7.5" y="5" width="8" height="11" fill="#3C3F41"/><text x="11.3" y="14.6" font-family="Liberation Sans" font-size="10.5" font-weight="bold" fill="#40B6E0" text-anchor="middle">?</text></svg>
<div class="t" style="left:1382px;top:570px;color:#BBBBBB">fstab.ranchu-encrypt</div>
<div class="t" style="left:1627px;top:570px;color:#A9A9A9;letter-spacing:-0.1px"><span style="letter-spacing:0.75px">-</span>rw<span style="letter-spacing:0.75px">-</span>r<span style="letter-spacing:0.75px">-</span><span style="letter-spacing:0.75px">-</span><span style="letter-spacing:0.75px">-</span><span style="letter-spacing:0.75px">-</span><span style="letter-spacing:0.75px">-</span></div>
<div class="t" style="left:1715px;top:570px;color:#BBBBBB;letter-spacing:-0.45px">1970-01-01 07:00</div>
<div class="t" style="right:30px;top:570px;color:#BBBBBB;letter-spacing:-0.3px">996 B</div>
<svg style="left:1366px;top:587px" width="16" height="16" viewBox="0 0 16 16"><path d="M5.5 0 H11 V14 H0.5 V4.5 H5.5Z" fill="#9AA7B0"/><path d="M0.5 3.9 L4.9 0 V3.9Z" fill="#9AA7B0"/><rect x="7.5" y="5" width="8" height="11" fill="#3C3F41"/><text x="11.3" y="14.6" font-family="Liberation Sans" font-size="10.5" font-weight="bold" fill="#40B6E0" text-anchor="middle">?</text></svg>
<div class="t" style="left:1382px;top:588px;color:#BBBBBB">fstab.ranchu-noencrypt</div>
<div class="t" style="left:1627px;top:588px;color:#A9A9A9;letter-spacing:-0.1px"><span style="letter-spacing:0.75px">-</span>rw<span style="letter-spacing:0.75px">-</span>r<span style="letter-spacing:0.75px">-</span><span style="letter-spacing:0.75px">-</span><span style="letter-spacing:0.75px">-</span><span style="letter-spacing:0.75px">-</span><span style="letter-spacing:0.75px">-</span></div>
<div class="t" style="left:1715px;top:588px;color:#BBBBBB;letter-spacing:-0.45px">1970-01-01 07:00</div>
<div class="t" style="right:30px;top:588px;color:#BBBBBB;letter-spacing:-0.3px">968 B</div>
<svg style="left:1366px;top:605px" width="16" height="16" viewBox="0 0 16 16"><path d="M5.5 0 H11 V14 H0.5 V4.5 H5.5Z" fill="#9AA7B0"/><path d="M0.5 3.9 L4.9 0 V3.9Z" fill="#9AA7B0"/><rect x="7.5" y="5" width="8" height="11" fill="#3C3F41"/><text x="11.3" y="14.6" font-family="Liberation Sans" font-size="10.5" font-weight="bold" fill="#40B6E0" text-anchor="middle">?</text></svg>
<div class="t" style="left:1382px;top:606px;color:#BBBBBB">init</div>
<div class="t" style="left:1627px;top:606px;color:#A9A9A9;letter-spacing:-0.1px"><span style="letter-spacing:0.75px">-</span>rwxr<span style="letter-spacing:0.75px">-</span>x<span style="letter-spacing:0.75px">-</span><span style="letter-spacing:0.75px">-</span><span style="letter-spacing:0.75px">-</span></div>
<div class="t" style="left:1715px;top:606px;color:#BBBBBB;letter-spacing:-0.45px">1970-01-01 07:00</div>
<div class="t" style="right:30px;top:606px;color:#BBBBBB;letter-spacing:-0.3px">1,4 MB</div>
<svg style="left:1366px;top:623px" width="16" height="16" viewBox="0 0 16 16"><path d="M5.5 0 H11 V14 H0.5 V4.5 H5.5Z" fill="#9AA7B0"/><path d="M0.5 3.9 L4.9 0 V3.9Z" fill="#9AA7B0"/><rect x="7.5" y="5" width="8" height="11" fill="#3C3F41"/><text x="11.3" y="14.6" font-family="Liberation Sans" font-size="10.5" font-weight="bold" fill="#40B6E0" text-anchor="middle">?</text></svg>
<div class="t" style="left:1382px;top:624px;color:#BBBBBB">init.environ.rc</div>
<div class="t" style="left:1627px;top:624px;color:#A9A9A9;letter-spacing:-0.1px"><span style="letter-spacing:0.75px">-</span>rwxr<span style="letter-spacing:0.75px">-</span>x<span style="letter-spacing:0.75px">-</span><span style="letter-spacing:0.75px">-</span><span style="letter-spacing:0.75px">-</span></div>
<div class="t" style="left:1715px;top:624px;color:#BBBBBB;letter-spacing:-0.45px">1970-01-01 07:00</div>
<div class="t" style="right:30px;top:624px;color:#BBBBBB;letter-spacing:-0.3px">887 B</div>
<svg style="left:1366px;top:641px" width="16" height="16" viewBox="0 0 16 16"><path d="M5.5 0 H11 V14 H0.5 V4.5 H5.5Z" fill="#9AA7B0"/><path d="M0.5 3.9 L4.9 0 V3.9Z" fill="#9AA7B0"/><rect x="7.5" y="5" width="8" height="11" fill="#3C3F41"/><text x="11.3" y="14.6" font-family="Liberation Sans" font-size="10.5" font-weight="bold" fill="#40B6E0" text-anchor="middle">?</text></svg>
<div class="t" style="left:1382px;top:642px;color:#BBBBBB">init.goldfish.rc</div>
<div class="t" style="left:1627px;top:642px;color:#A9A9A9;letter-spacing:-0.1px"><span style="letter-spacing:0.75px">-</span>rwxr<span style="letter-spacing:0.75px">-</span>x<span style="letter-spacing:0.75px">-</span><span style="letter-spacing:0.75px">-</span><span style="letter-spacing:0.75px">-</span></div>
<div class="t" style="left:1715px;top:642px;color:#BBBBBB;letter-spacing:-0.45px">1970-01-01 07:00</div>
<div class="t" style="right:30px;top:642px;color:#BBBBBB;letter-spacing:-0.3px">3,5 KB</div>
<svg style="left:1366px;top:659px" width="16" height="16" viewBox="0 0 16 16"><path d="M5.5 0 H11 V14 H0.5 V4.5 H5.5Z" fill="#9AA7B0"/><path d="M0.5 3.9 L4.9 0 V3.9Z" fill="#9AA7B0"/><rect x="7.5" y="5" width="8" height="11" fill="#3C3F41"/><text x="11.3" y="14.6" font-family="Liberation Sans" font-size="10.5" font-weight="bold" fill="#40B6E0" text-anchor="middle">?</text></svg>
<div class="t" style="left:1382px;top:660px;color:#BBBBBB">init.ranchu-encrypt.rc</div>
<div class="t" style="left:1627px;top:660px;color:#A9A9A9;letter-spacing:-0.1px"><span style="letter-spacing:0.75px">-</span>rwxr<span style="letter-spacing:0.75px">-</span>x<span style="letter-spacing:0.75px">-</span><span style="letter-spacing:0.75px">-</span><span style="letter-spacing:0.75px">-</span></div>
<div class="t" style="left:1715px;top:660px;color:#BBBBBB;letter-spacing:-0.45px">1970-01-01 07:00</div>
<div class="t" style="right:30px;top:660px;color:#BBBBBB;letter-spacing:-0.3px">96 B</div>
<svg style="left:1366px;top:677px" width="16" height="16" viewBox="0 0 16 16"><path d="M5.5 0 H11 V14 H0.5 V4.5 H5.5Z" fill="#9AA7B0"/><path d="M0.5 3.9 L4.9 0 V3.9Z" fill="#9AA7B0"/><rect x="7.5" y="5" width="8" height="11" fill="#3C3F41"/><text x="11.3" y="14.6" font-family="Liberation Sans" font-size="10.5" font-weight="bold" fill="#40B6E0" text-anchor="middle">?</text></svg>
<div class="t" style="left:1382px;top:678px;color:#BBBBBB">init.ranchu-noencrypt.rc</div>
<div class="t" style="left:1627px;top:678px;color:#A9A9A9;letter-spacing:-0.1px"><span style="letter-spacing:0.75px">-</span>rwxr<span style="letter-spacing:0.75px">-</span>x<span style="letter-spacing:0.75px">-</span><span style="letter-spacing:0.75px">-</span><span style="letter-spacing:0.75px">-</span></div>
<div class="t" style="left:1715px;top:678px;color:#BBBBBB;letter-spacing:-0.45px">1970-01-01 07:00</div>
<div class="t" style="right:30px;top:678px;color:#BBBBBB;letter-spacing:-0.3px">45 B</div>
<svg style="left:1366px;top:695px" width="16" height="16" viewBox="0 0 16 16"><path d="M5.5 0 H11 V14 H0.5 V4.5 H5.5Z" fill="#9AA7B0"/><path d="M0.5 3.9 L4.9 0 V3.9Z" fill="#9AA7B0"/><rect x="7.5" y="5" width="8" height="11" fill="#3C3F41"/><text x="11.3" y="14.6" font-family="Liberation Sans" font-size="10.5" font-weight="bold" fill="#40B6E0" text-anchor="middle">?</text></svg>
<div class="t" style="left:1382px;top:696px;color:#BBBBBB">init.ranchu.rc</div>
<div class="t" style="left:1627px;top:696px;color:#A9A9A9;letter-spacing:-0.1px"><span style="letter-spacing:0.75px">-</span>rwxr<span style="letter-spacing:0.75px">-</span>x<span style="letter-spacing:0.75px">-</span><span style="letter-spacing:0.75px">-</span><span style="letter-spacing:0.75px">-</span></div>
<div class="t" style="left:1715px;top:696px;color:#BBBBBB;letter-spacing:-0.45px">1970-01-01 07:00</div>
<div class="t" style="right:30px;top:696px;color:#BBBBBB;letter-spacing:-0.3px">4,3 KB</div>
<svg style="left:1366px;top:713px" width="16" height="16" viewBox="0 0 16 16"><path d="M5.5 0 H11 V14 H0.5 V4.5 H5.5Z" fill="#9AA7B0"/><path d="M0.5 3.9 L4.9 0 V3.9Z" fill="#9AA7B0"/><rect x="7.5" y="5" width="8" height="11" fill="#3C3F41"/><text x="11.3" y="14.6" font-family="Liberation Sans" font-size="10.5" font-weight="bold" fill="#40B6E0" text-anchor="middle">?</text></svg>
<div class="t" style="left:1382px;top:714px;color:#BBBBBB">init.rc</div>
<div class="t" style="left:1627px;top:714px;color:#A9A9A9;letter-spacing:-0.1px"><span style="letter-spacing:0.75px">-</span>rwxr<span style="letter-spacing:0.75px">-</span>x<span style="letter-spacing:0.75px">-</span><span style="letter-spacing:0.75px">-</span><span style="letter-spacing:0.75px">-</span></div>
<div class="t" style="left:1715px;top:714px;color:#BBBBBB;letter-spacing:-0.45px">1970-01-01 07:00</div>
<div class="t" style="right:30px;top:714px;color:#BBBBBB;letter-spacing:-0.3px">23,5 KB</div>
<svg style="left:1366px;top:731px" width="16" height="16" viewBox="0 0 16 16"><path d="M5.5 0 H11 V14 H0.5 V4.5 H5.5Z" fill="#9AA7B0"/><path d="M0.5 3.9 L4.9 0 V3.9Z" fill="#9AA7B0"/><rect x="7.5" y="5" width="8" height="11" fill="#3C3F41"/><text x="11.3" y="14.6" font-family="Liberation Sans" font-size="10.5" font-weight="bold" fill="#40B6E0" text-anchor="middle">?</text></svg>
<div class="t" style="left:1382px;top:732px;color:#BBBBBB">init.usb.configfs.rc</div>
<div class="t" style="left:1627px;top:732px;color:#A9A9A9;letter-spacing:-0.1px"><span style="letter-spacing:0.75px">-</span>rwxr<span style="letter-spacing:0.75px">-</span>x<span style="letter-spacing:0.75px">-</span><span style="letter-spacing:0.75px">-</span><span style="letter-spacing:0.75px">-</span></div>
<div class="t" style="left:1715px;top:732px;color:#BBBBBB;letter-spacing:-0.45px">1970-01-01 07:00</div>
<div class="t" style="right:30px;top:732px;color:#BBBBBB;letter-spacing:-0.3px">9,1 KB</div>
<svg style="left:1366px;top:749px" width="16" height="16" viewBox="0 0 16 16"><path d="M5.5 0 H11 V14 H0.5 V4.5 H5.5Z" fill="#9AA7B0"/><path d="M0.5 3.9 L4.9 0 V3.9Z" fill="#9AA7B0"/><rect x="7.5" y="5" width="8" height="11" fill="#3C3F41"/><text x="11.3" y="14.6" font-family="Liberation Sans" font-size="10.5" font-weight="bold" fill="#40B6E0" text-anchor="middle">?</text></svg>
<div class="t" style="left:1382px;top:750px;color:#BBBBBB">init.usb.rc</div>
<div class="t" style="left:1627px;top:750px;color:#A9A9A9;letter-spacing:-0.1px"><span style="letter-spacing:0.75px">-</span>rwxr<span style="letter-spacing:0.75px">-</span>x<span style="letter-spacing:0.75px">-</span><span style="letter-spacing:0.75px">-</span><span style="letter-spacing:0.75px">-</span></div>
<div class="t" style="left:1715px;top:750px;color:#BBBBBB;letter-spacing:-0.45px">1970-01-01 07:00</div>
<div class="t" style="right:30px;top:750px;color:#BBBBBB;letter-spacing:-0.3px">5,7 KB</div>
<svg style="left:1366px;top:767px" width="16" height="16" viewBox="0 0 16 16"><path d="M5.5 0 H11 V14 H0.5 V4.5 H5.5Z" fill="#9AA7B0"/><path d="M0.5 3.9 L4.9 0 V3.9Z" fill="#9AA7B0"/><rect x="7.5" y="5" width="8" height="11" fill="#3C3F41"/><text x="11.3" y="14.6" font-family="Liberation Sans" font-size="10.5" font-weight="bold" fill="#40B6E0" text-anchor="middle">?</text></svg>
<div class="t" style="left:1382px;top:768px;color:#BBBBBB">init.zygote32.rc</div>
<div class="t" style="left:1627px;top:768px;color:#A9A9A9;letter-spacing:-0.1px"><span style="letter-spacing:0.75px">-</span>rwxr<span style="letter-spacing:0.75px">-</span>x<span style="letter-spacing:0.75px">-</span><span style="letter-spacing:0.75px">-</span><span style="letter-spacing:0.75px">-</span></div>
<div class="t" style="left:1715px;top:768px;color:#BBBBBB;letter-spacing:-0.45px">1970-01-01 07:00</div>
<div class="t" style="right:30px;top:768px;color:#BBBBBB;letter-spacing:-0.3px">439 B</div>
<svg style="left:1366px;top:785px" width="16" height="16" viewBox="0 0 16 16"><path d="M5.5 0 H11 V14 H0.5 V4.5 H5.5Z" fill="#9AA7B0"/><path d="M0.5 3.9 L4.9 0 V3.9Z" fill="#9AA7B0"/><rect x="7.5" y="5" width="8" height="11" fill="#3C3F41"/><text x="11.3" y="14.6" font-family="Liberation Sans" font-size="10.5" font-weight="bold" fill="#40B6E0" text-anchor="middle">?</text></svg>
<div class="t" style="left:1382px;top:786px;color:#BBBBBB">property_contexts</div>
<div class="t" style="left:1627px;top:786px;color:#A9A9A9;letter-spacing:-0.1px"><span style="letter-spacing:0.75px">-</span>rw<span style="letter-spacing:0.75px">-</span>r<span style="letter-spacing:0.75px">-</span><span style="letter-spacing:0.75px">-</span>r<span style="letter-spacing:0.75px">-</span><span style="letter-spacing:0.75px">-</span></div>
<div class="t" style="left:1715px;top:786px;color:#BBBBBB;letter-spacing:-0.45px">1970-01-01 07:00</div>
<div class="t" style="right:30px;top:786px;color:#BBBBBB;letter-spacing:-0.3px">4,5 KB</div>
<svg style="left:1366px;top:803px" width="16" height="16" viewBox="0 0 16 16"><path d="M5.5 0 H11 V14 H0.5 V4.5 H5.5Z" fill="#9AA7B0"/><path d="M0.5 3.9 L4.9 0 V3.9Z" fill="#9AA7B0"/><rect x="7.5" y="5" width="8" height="11" fill="#3C3F41"/><text x="11.3" y="14.6" font-family="Liberation Sans" font-size="10.5" font-weight="bold" fill="#40B6E0" text-anchor="middle">?</text></svg>
<div class="t" style="left:1382px;top:804px;color:#BBBBBB">seapp_contexts</div>
<div class="t" style="left:1627px;top:804px;color:#A9A9A9;letter-spacing:-0.1px"><span style="letter-spacing:0.75px">-</span>rw<span style="letter-spacing:0.75px">-</span>r<span style="letter-spacing:0.75px">-</span><span style="letter-spacing:0.75px">-</span>r<span style="letter-spacing:0.75px">-</span><span style="letter-spacing:0.75px">-</span></div>
<div class="t" style="left:1715px;top:804px;color:#BBBBBB;letter-spacing:-0.45px">1970-01-01 07:00</div>
<div class="t" style="right:30px;top:804px;color:#BBBBBB;letter-spacing:-0.3px">758 B</div>
<svg style="left:1366px;top:821px" width="16" height="16" viewBox="0 0 16 16"><path d="M5.5 0 H11 V14 H0.5 V4.5 H5.5Z" fill="#9AA7B0"/><path d="M0.5 3.9 L4.9 0 V3.9Z" fill="#9AA7B0"/><rect x="7.5" y="5" width="8" height="11" fill="#3C3F41"/><text x="11.3" y="14.6" font-family="Liberation Sans" font-size="10.5" font-weight="bold" fill="#40B6E0" text-anchor="middle">?</text></svg>
<div class="t" style="left:1382px;top:822px;color:#BBBBBB">selinux_version</div>
<div class="t" style="left:1627px;top:822px;color:#A9A9A9;letter-spacing:-0.1px"><span style="letter-spacing:0.75px">-</span>rw<span style="letter-spacing:0.75px">-</span>r<span style="letter-spacing:0.75px">-</span><span style="letter-spacing:0.75px">-</span>r<span style="letter-spacing:0.75px">-</span><span style="letter-spacing:0.75px">-</span></div>
<div class="t" style="left:1715px;top:822px;color:#BBBBBB;letter-spacing:-0.45px">1970-01-01 07:00</div>
<div class="t" style="right:30px;top:822px;color:#BBBBBB;letter-spacing:-0.3px">69 B</div>
<svg style="left:1366px;top:839px" width="16" height="16" viewBox="0 0 16 16"><path d="M5.5 0 H11 V14 H0.5 V4.5 H5.5Z" fill="#9AA7B0"/><path d="M0.5 3.9 L4.9 0 V3.9Z" fill="#9AA7B0"/><rect x="7.5" y="5" width="8" height="11" fill="#3C3F41"/><text x="11.3" y="14.6" font-family="Liberation Sans" font-size="10.5" font-weight="bold" fill="#40B6E0" text-anchor="middle">?</text></svg>
<div class="t" style="left:1382px;top:840px;color:#BBBBBB">sepolicy</div>
<div class="t" style="left:1627px;top:840px;color:#A9A9A9;letter-spacing:-0.1px"><span style="letter-spacing:0.75px">-</span>rw<span style="letter-spacing:0.75px">-</span>r<span style="letter-spacing:0.75px">-</span><span style="letter-spacing:0.75px">-</span>r<span style="letter-spacing:0.75px">-</span><span style="letter-spacing:0.75px">-</span></div>
<div class="t" style="left:1715px;top:840px;color:#BBBBBB;letter-spacing:-0.45px">1970-01-01 07:00</div>
<div class="t" style="right:30px;top:840px;color:#BBBBBB;letter-spacing:-0.3px">173,3 KB</div>
<svg style="left:1366px;top:857px" width="16" height="16" viewBox="0 0 16 16"><path d="M5.5 0 H11 V14 H0.5 V4.5 H5.5Z" fill="#9AA7B0"/><path d="M0.5 3.9 L4.9 0 V3.9Z" fill="#9AA7B0"/><rect x="7.5" y="5" width="8" height="11" fill="#3C3F41"/><text x="11.3" y="14.6" font-family="Liberation Sans" font-size="10.5" font-weight="bold" fill="#40B6E0" text-anchor="middle">?</text></svg>
<div class="t" style="left:1382px;top:858px;color:#BBBBBB">service_contexts</div>
<div class="t" style="left:1627px;top:858px;color:#A9A9A9;letter-spacing:-0.1px"><span style="letter-spacing:0.75px">-</span>rw<span style="letter-spacing:0.75px">-</span>r<span style="letter-spacing:0.75px">-</span><span style="letter-spacing:0.75px">-</span>r<span style="letter-spacing:0.75px">-</span><span style="letter-spacing:0.75px">-</span></div>
<div class="t" style="left:1715px;top:858px;color:#BBBBBB;letter-spacing:-0.45px">1970-01-01 07:00</div>
<div class="t" style="right:30px;top:858px;color:#BBBBBB;letter-spacing:-0.3px">10,8 KB</div>
<svg style="left:1366px;top:875px" width="16" height="16" viewBox="0 0 16 16"><path d="M5.5 0 H11 V14 H0.5 V4.5 H5.5Z" fill="#9AA7B0"/><path d="M0.5 3.9 L4.9 0 V3.9Z" fill="#9AA7B0"/><rect x="7.5" y="5" width="8" height="11" fill="#3C3F41"/><text x="11.3" y="14.6" font-family="Liberation Sans" font-size="10.5" font-weight="bold" fill="#40B6E0" text-anchor="middle">?</text></svg>
<div class="t" style="left:1382px;top:876px;color:#BBBBBB">ueventd.goldfish.rc</div>
<div class="t" style="left:1627px;top:876px;color:#A9A9A9;letter-spacing:-0.1px"><span style="letter-spacing:0.75px">-</span>rw<span style="letter-spacing:0.75px">-</span>r<span style="letter-spacing:0.75px">-</span><span style="letter-spacing:0.75px">-</span>r<span style="letter-spacing:0.75px">-</span><span style="letter-spacing:0.75px">-</span></div>
<div class="t" style="left:1715px;top:876px;color:#BBBBBB;letter-spacing:-0.45px">1970-01-01 07:00</div>
<div class="t" style="right:30px;top:876px;color:#BBBBBB;letter-spacing:-0.3px">323 B</div>
<svg style="left:1366px;top:893px" width="16" height="16" viewBox="0 0 16 16"><path d="M5.5 0 H11 V14 H0.5 V4.5 H5.5Z" fill="#9AA7B0"/><path d="M0.5 3.9 L4.9 0 V3.9Z" fill="#9AA7B0"/><rect x="7.5" y="5" width="8" height="11" fill="#3C3F41"/><text x="11.3" y="14.6" font-family="Liberation Sans" font-size="10.5" font-weight="bold" fill="#40B6E0" text-anchor="middle">?</text></svg>
<div class="t" style="left:1382px;top:894px;color:#BBBBBB">ueventd.ranchu.rc</div>
<div class="t" style="left:1627px;top:894px;color:#A9A9A9;letter-spacing:-0.1px"><span style="letter-spacing:0.75px">-</span>rw<span style="letter-spacing:0.75px">-</span>r<span style="letter-spacing:0.75px">-</span><span style="letter-spacing:0.75px">-</span>r<span style="letter-spacing:0.75px">-</span><span style="letter-spacing:0.75px">-</span></div>
<div class="t" style="left:1715px;top:894px;color:#BBBBBB;letter-spacing:-0.45px">1970-01-01 07:00</div>
<div class="t" style="right:30px;top:894px;color:#BBBBBB;letter-spacing:-0.3px">323 B</div>
<svg style="left:1366px;top:911px" width="16" height="16" viewBox="0 0 16 16"><path d="M5.5 0 H11 V14 H0.5 V4.5 H5.5Z" fill="#9AA7B0"/><path d="M0.5 3.9 L4.9 0 V3.9Z" fill="#9AA7B0"/><rect x="7.5" y="5" width="8" height="11" fill="#3C3F41"/><text x="11.3" y="14.6" font-family="Liberation Sans" font-size="10.5" font-weight="bold" fill="#40B6E0" text-anchor="middle">?</text></svg>
<div class="t" style="left:1382px;top:912px;color:#BBBBBB">ueventd.rc</div>
<div class="t" style="left:1627px;top:912px;color:#A9A9A9;letter-spacing:-0.1px"><span style="letter-spacing:0.75px">-</span>rw<span style="letter-spacing:0.75px">-</span>r<span style="letter-spacing:0.75px">-</span><span style="letter-spacing:0.75px">-</span>r<span style="letter-spacing:0.75px">-</span><span style="letter-spacing:0.75px">-</span></div>
<div class="t" style="left:1715px;top:912px;color:#BBBBBB;letter-spacing:-0.45px">1970-01-01 07:00</div>
<div class="t" style="right:30px;top:912px;color:#BBBBBB;letter-spacing:-0.3px">4,7 KB</div>
<svg style="left:10px;top:52px" width="16" height="16" viewBox="0 0 16 16"><path d="M0 1 H5 L6.5 3 H14 V12 H0Z" fill="#9AA7B0"/><path d="M5 10 H14 V14 Q14 15 13 15 H6 Q5 15 5 14Z" fill="#40B6E0"/><rect x="14" y="11" width="2" height="2" fill="#40B6E0"/></svg>
<div class="t" style="left:28px;top:54px;font-weight:bold;color:#BBBBBB;letter-spacing:-0.2px">mobile-android-legacy</div>
<svg style="left:158px;top:52px" width="6" height="18" viewBox="0 0 6 18"><path d="M0.5 0.5 L5.5 9 L0.5 17.5" stroke="#2B2B2B" stroke-width="1" fill="none"/></svg>
<svg style="left:167px;top:52px" width="14" height="13" viewBox="0 0 14 13"><path d="M0 1 H5 L6.5 3 H14 V12 H0Z" fill="#9AA7B0"/></svg>
<div class="t" style="left:185px;top:54px;color:#BBBBBB">ndk-modules</div>
<svg style="left:260px;top:52px" width="6" height="18" viewBox="0 0 6 18"><path d="M0.5 0.5 L5.5 9 L0.5 17.5" stroke="#2B2B2B" stroke-width="1" fill="none"/></svg>
<svg style="left:270px;top:51px" width="16" height="16" viewBox="0 0 16 16"><path d="M1 1 H5.5 L7 3.5 H15 V12 H1Z" fill="#9AA7B0"/><circle cx="12.5" cy="12.5" r="3.5" fill="#3C3F41"/><circle cx="12.5" cy="12.5" r="2.4" fill="#8BC34A"/></svg>
<div class="t" style="left:288px;top:54px;font-weight:bold;color:#BBBBBB;letter-spacing:-0.1px">ovkmplayer</div>
<svg style="left:358px;top:52px" width="6" height="18" viewBox="0 0 6 18"><path d="M0.5 0.5 L5.5 9 L0.5 17.5" stroke="#2B2B2B" stroke-width="1" fill="none"/></svg>
<svg style="left:368px;top:52px" width="16" height="16" viewBox="0 0 16 16"><path d="M5.8 0 H12 V8 H1 V4.8 H5.8Z" fill="#9AA7B0"/><path d="M1 4.2 L5.2 0 V4.2Z" fill="#9AA7B0"/><rect x="0" y="9" width="15" height="7" fill="#9E80D2"/><text x="7.6" y="15.2" font-family="Liberation Sans" font-size="7" fill="#3B2E52" text-anchor="middle" font-weight="bold" letter-spacing="-0.2">C++</text></svg>
<div class="t" style="left:386px;top:54px;color:#BBBBBB">ovkmplay.cpp</div>
<svg style="left:465px;top:52px" width="6" height="18" viewBox="0 0 6 18"><path d="M0.5 0.5 L5.5 9 L0.5 17.5" stroke="#2B2B2B" stroke-width="1" fill="none"/></svg>
<svg style="left:1377px;top:52px" width="16" height="16" viewBox="0 0 16 16"><path d="M2 7 Q3 3.5 8 1.8" stroke="#3FB94F" stroke-width="3.6" stroke-linecap="round" fill="none"/><path d="M6.5 5 L13.8 13.2" stroke="#3FB94F" stroke-width="2.6" stroke-linecap="round"/></svg>
<div class="a" style="left:1400px;top:51px;width:73px;height:19px;border:1px solid #5A5D5F;border-radius:3px"></div>
<svg style="left:1404px;top:54px" width="18" height="14" viewBox="0 0 18 14"><path d="M6 11.5 H1 V1 H5.5 L7 3 H13.5 V6" stroke="#E8A53D" stroke-width="2" fill="none"/><path d="M7.0 12.5 A5.0 5.5 0 0 1 17.0 12.5Z" fill="#A4C639"/><path d="M9.0 5.8 L10.0 7.6 M15.0 5.8 L14.0 7.6" stroke="#A4C639" stroke-width="0.9"/><circle cx="9.8" cy="10.41" r="0.75" fill="#fff"/><circle cx="14.2" cy="10.41" r="0.75" fill="#fff"/></svg>
<div class="t" style="left:1424px;top:54px;color:#BBBBBB">app</div>
<svg style="left:1459px;top:57px" width="9" height="6" viewBox="0 0 9 6"><path d="M0 0 H9 L4.5 6Z" fill="#BBBBBB"/></svg>
<svg style="left:1481px;top:53px" width="12" height="15" viewBox="0 0 12 15"><path d="M0 0 L12 7.5 L0 15Z" fill="#3EA843"/></svg>
<svg style="left:1507px;top:53px" width="9" height="15" viewBox="0 0 9 15"><path d="M6 0 L1 8 H4.5 L3 15 L8 6 H4.5Z" fill="#6A6D6F"/></svg>
<svg style="left:1529px;top:52px" width="16" height="16" viewBox="0 0 16 16"><path d="M12.74 6.63 L12.74 8.37 L11.40 8.50 L11.05 9.57 L12.06 10.47 L11.04 11.87 L9.88 11.19 L8.96 11.85 L9.25 13.17 L7.60 13.70 L7.06 12.47 L5.94 12.47 L5.40 13.70 L3.75 13.17 L4.04 11.85 L3.12 11.19 L1.96 11.87 L0.94 10.47 L1.95 9.57 L1.60 8.50 L0.26 8.37 L0.26 6.63 L1.60 6.50 L1.95 5.43 L0.94 4.53 L1.96 3.13 L3.12 3.81 L4.04 3.15 L3.75 1.83 L5.40 1.30 L5.94 2.53 L7.06 2.53 L7.60 1.30 L9.25 1.83 L8.96 3.15 L9.88 3.81 L11.04 3.13 L12.06 4.53 L11.05 5.43 L11.40 6.50Z" fill="#9A9C9E"/><path d="M6.5 6.5 L15 11.5 L6.5 16.5Z" fill="#3FB94F"/></svg>
<svg style="left:1556px;top:52px" width="15" height="16" viewBox="0 0 15 16"><rect x="1" y="3" width="2" height="12" fill="#55585A"/><rect x="4.5" y="1" width="2" height="14" fill="#55585A"/><path d="M8 4 L15 9.5 L8 15Z" fill="#55585A"/></svg>
<svg style="left:1580px;top:53px" width="16" height="16" viewBox="0 0 16 16"><path d="M1.5 11 A6.5 6.5 0 0 1 8 4.5" fill="none" stroke="#6EB5F0" stroke-width="2.2"/><path d="M8 4.5 A6.5 6.5 0 0 1 14.5 11" fill="none" stroke="#C8C8C8" stroke-width="2.2"/><path d="M7 11 L11.2 5" stroke="#C8C8C8" stroke-width="1.8"/><circle cx="13" cy="13.5" r="2" fill="#1E1E1E"/><circle cx="13" cy="13.5" r="1.4" fill="#3FB94F"/></svg>
<svg style="left:1605px;top:52px" width="16" height="17" viewBox="0 0 16 17"><path d="M6.5 15.5 H0.8 V0.8 H9.2 V5" stroke="#8E9193" stroke-width="1.3" fill="none"/><path d="M15.53 10.71 L15.53 12.29 L14.29 12.35 L13.93 13.23 L14.76 14.15 L13.65 15.26 L12.73 14.43 L11.85 14.79 L11.79 16.03 L10.21 16.03 L10.15 14.79 L9.27 14.43 L8.35 15.26 L7.24 14.15 L8.07 13.23 L7.71 12.35 L6.47 12.29 L6.47 10.71 L7.71 10.65 L8.07 9.77 L7.24 8.85 L8.35 7.74 L9.27 8.57 L10.15 8.21 L10.21 6.97 L11.79 6.97 L11.85 8.21 L12.73 8.57 L13.65 7.74 L14.76 8.85 L13.93 9.77 L14.29 10.65Z" fill="#3FB94F"/><rect x="8.5" y="7" width="5" height="9.5" rx="2.4" fill="#3FB94F"/></svg>
<div class="a" style="left:1631px;top:54px;width:12px;height:12px;background:#55585A"></div>
<svg style="left:1653px;top:50px" width="1" height="22" viewBox="0 0 1 22"><path d="M0.5 0 V22" stroke="#7A7A7A" stroke-dasharray="1 2"/></svg>
<svg style="left:1660px;top:52px" width="16" height="16" viewBox="0 0 16 16"><path d="M8 10 L15 1" stroke="#40B6E0" stroke-width="2.5"/><path d="M4 5 V12 H11Z" fill="#40B6E0"/><circle cx="3" cy="10" r="2" fill="#9AA7B0"/><circle cx="6" cy="15" r="2" fill="#9AA7B0"/></svg>
<svg style="left:1685px;top:52px" width="16" height="17" viewBox="0 0 16 17"><path d="M4 5 L8 14 L13 6" stroke="#9AA7B0" stroke-width="1.6" fill="none"/><circle cx="4.5" cy="4.5" r="3.3" fill="#62B543"/><circle cx="13" cy="6" r="2.2" fill="#9AA7B0"/><circle cx="8" cy="14.5" r="2.2" fill="#9AA7B0"/></svg>
<svg style="left:1711px;top:52px" width="16" height="16" viewBox="0 0 16 16"><rect x="0.5" y="4.5" width="8" height="8" fill="none" stroke="#9AA7B0" stroke-width="1.4"/><rect x="3.5" y="7.5" width="8" height="8" fill="none" stroke="#9AA7B0" stroke-width="1.4"/><circle cx="11" cy="5" r="4.5" fill="#40B6E0"/><path d="M11 2 V5 H13.5" stroke="#fff" stroke-width="1" fill="none"/></svg>
<svg style="left:1736px;top:53px" width="12" height="14" viewBox="0 0 12 14"><path d="M3 2 L0.5 5 L3 8 M0.5 5 H7 A4.5 4.5 0 0 1 7 14 H3" stroke="#55585A" stroke-width="1.8" fill="none"/></svg>
<svg style="left:1759px;top:50px" width="1" height="22" viewBox="0 0 1 22"><path d="M0.5 0 V22" stroke="#7A7A7A" stroke-dasharray="1 2"/></svg>
<svg style="left:1766px;top:52px" width="15" height="16" viewBox="0 0 15 16"><path d="M1 5 A7.5 7.5 0 0 1 14 5 M1 11 A7.5 7.5 0 0 0 14 11" stroke="#40B6E0" stroke-width="1.5" fill="none"/><circle cx="7.5" cy="8" r="4" fill="none" stroke="#A4C639" stroke-width="1.8"/><circle cx="7.5" cy="8" r="1.5" fill="#3EA843"/></svg>
<svg style="left:1791px;top:52px" width="17" height="17" viewBox="0 0 17 17"><rect x="1" y="0.7" width="8" height="15.3" fill="none" stroke="#8E9193" stroke-width="1.3"/><rect x="2.5" y="2.2" width="5" height="11" fill="#C387E0"/><rect x="4" y="10" width="13" height="7" fill="#3C3F41"/><path d="M5.5 16.5 A5.0 5.5 0 0 1 15.5 16.5Z" fill="#A4C639"/><path d="M7.5 9.8 L8.5 11.6 M13.5 9.8 L12.5 11.6" stroke="#A4C639" stroke-width="0.9"/><circle cx="8.3" cy="14.41" r="0.75" fill="#fff"/><circle cx="12.7" cy="14.41" r="0.75" fill="#fff"/></svg>
<svg style="left:1815px;top:50px" width="1" height="22" viewBox="0 0 1 22"><path d="M0.5 0 V22" stroke="#7A7A7A" stroke-dasharray="1 2"/></svg>
<svg style="left:1822px;top:52px" width="17" height="17" viewBox="0 0 17 17"><path d="M5.5 0.5 V10 M2 6.5 L5.5 10.5 L9 6.5" stroke="#3FA3D6" stroke-width="2.6" fill="none"/><rect x="1" y="15" width="3" height="1.5" fill="#3FA3D6"/><rect x="5" y="10" width="12" height="7" fill="#3C3F41"/><path d="M6.5 16.5 A5.0 5.5 0 0 1 16.5 16.5Z" fill="#A4C639"/><path d="M8.5 9.8 L9.5 11.6 M14.5 9.8 L13.5 11.6" stroke="#A4C639" stroke-width="0.9"/><circle cx="9.3" cy="14.41" r="0.75" fill="#fff"/><circle cx="13.7" cy="14.41" r="0.75" fill="#fff"/></svg>
<svg style="left:1847px;top:52px" width="16" height="16" viewBox="0 0 16 16"><path d="M5.5 13 H0.8 V2.8 H5.5 L7 4.2 H13.5" stroke="#8E9193" stroke-width="1.5" fill="none"/><rect x="6.5" y="10" width="3.6" height="4" fill="#1FA3E8"/><rect x="12" y="5.5" width="3.6" height="3.6" fill="#1FA3E8"/><rect x="12" y="10" width="3.6" height="4" fill="#1FA3E8"/></svg>
<svg style="left:1873px;top:52px" width="15" height="16" viewBox="0 0 15 16"><circle cx="6" cy="6" r="4.5" fill="none" stroke="#AFB1B3" stroke-width="2"/><path d="M9.5 9.5 L14 14" stroke="#AFB1B3" stroke-width="2.5"/></svg>
<svg style="left:1897px;top:52px" width="16" height="16" viewBox="0 0 16 16"><rect width="16" height="16" fill="#D7D7D7"/><circle cx="8" cy="6" r="3.2" fill="#fff"/><path d="M2 16 Q2 9.5 8 9.5 Q14 9.5 14 16Z" fill="#fff"/></svg>
<div class="a" style="left:0;top:1005px;width:1920px;height:24px;background:#3C3F41;border-top:2px solid #4E5052;border-bottom:1px solid #484A4C"></div>
<svg style="left:31px;top:1011px" width="11" height="13" viewBox="0 0 11 13"><path d="M0 0 L11 6.5 L0 13Z" fill="#3EA843"/></svg>
<div class="t" style="left:47px;top:1012px;transform-origin:0 0;transform:scaleX(0.9337);"><span class="u">4</span>: Run</div>
<svg style="left:100px;top:1010px" width="14" height="15" viewBox="0 0 14 15"><circle cx="4" cy="4" r="3.2" fill="#fff" stroke="#555"/><path d="M2.3 3.3 H5.7 M2.3 4.7 H5.7" stroke="#555" stroke-width="0.8"/><circle cx="8.5" cy="8" r="4" fill="#F0C090"/><path d="M4.5 6.5 Q8.5 2 12.5 6.5Z" fill="#777"/><path d="M3.5 15 Q8.5 10.5 13.5 15Z" fill="#40B6E0"/></svg>
<div class="t" style="left:118px;top:1012px;transform-origin:0 0;transform:scaleX(0.8711);">TODO</div>
<svg style="left:168px;top:1012px" width="12" height="10" viewBox="0 0 12 10"><path d="M0 1 H11 M0 4.5 H7 M0 8 H11" stroke="#BBBBBB" stroke-width="1.8"/></svg>
<div class="t" style="left:185px;top:1012px;transform-origin:0 0;transform:scaleX(0.9322);"><span class="u">6</span>: Logcat</div>
<svg style="left:253px;top:1011px" width="15" height="14" viewBox="0 0 15 14"><path d="M1 11 A6.5 6.5 0 0 1 14 11" fill="none" stroke="#AFB1B3" stroke-width="2"/><path d="M7.5 11 L11 5" stroke="#AFB1B3" stroke-width="1.8"/><circle cx="12.5" cy="12.5" r="1.6" fill="#3EA843"/></svg>
<div class="t" style="left:271px;top:1012px;transform-origin:0 0;transform:scaleX(0.9915);">Android Profiler</div>
<svg style="left:377px;top:1011px" width="14" height="14" viewBox="0 0 14 14"><path d="M2.5 2.5 L6.5 11 L11 2.5" stroke="#9AA7B0" stroke-width="1.6" fill="none"/><circle cx="2.6" cy="2.6" r="2.4" fill="#40B6E0"/><circle cx="11" cy="2.6" r="2.4" fill="#9AA7B0"/><circle cx="6.6" cy="11" r="2.4" fill="#9AA7B0"/></svg>
<div class="t" style="left:394px;top:1012px;transform-origin:0 0;transform:scaleX(0.9646);"><span class="u">9</span>: Version Control</div>
<svg style="left:511px;top:1011px" width="13" height="13" viewBox="0 0 13 13"><rect x="0.5" y="0.5" width="12" height="12" fill="#1A1A1A" stroke="#9AA7B0"/><path d="M2.5 4 L5 6 L2.5 8 M6 9.5 H10" stroke="#DDD" stroke-width="1" fill="none"/></svg>
<div class="t" style="left:528px;top:1012px;transform-origin:0 0;transform:scaleX(0.9480);">Terminal</div>
<svg style="left:592px;top:1010px" width="15" height="15" viewBox="0 0 15 15"><path d="M3.5 0 V13 M0.5 10 L3.5 14 L6.5 10" stroke="#3EA843" stroke-width="1.8" fill="none"/><text x="7" y="6" font-family="Liberation Sans" font-size="5.5" fill="#BBBBBB">01</text><text x="7" y="11.5" font-family="Liberation Sans" font-size="5.5" fill="#BBBBBB">10</text></svg>
<div class="t" style="left:608px;top:1012px;transform-origin:0 0;transform:scaleX(1.0117);">Build</div>
<svg style="left:1818px;top:1010px" width="16" height="15" viewBox="0 0 16 15"><circle cx="7.5" cy="7" r="6.5" fill="#5AB55A"/><path d="M9 12 L14 15 L11 10Z" fill="#5AB55A"/><text x="7.5" y="10.5" font-family="Liberation Sans" font-size="9" fill="#1E3B1E" text-anchor="middle">3</text></svg>
<div class="t" style="left:1838px;top:1012px;transform-origin:0 0;transform:scaleX(0.9257);">Event Log</div>
<div class="a" style="left:0;top:1028px;width:1920px;height:22px;background:#3C3F41"></div>
<div class="a" style="left:9px;top:1033px;width:14px;height:13px;background:#555759;border:1px solid #6E7072;border-bottom-width:2px"></div>
<div class="t" style="left:32px;top:1033px">Can't bind to local 8616 for debugger (59 minutes ago)</div>
<div class="t" style="left:1484px;top:1033px;transform-origin:0 0;transform:scaleX(0.9219);">112:18</div>
<div class="t" style="left:1528px;top:1033px;transform-origin:0 0;transform:scaleX(0.8614);">CRLF</div>
<svg style="left:1556px;top:1036px" width="5" height="9" viewBox="0 0 5 9"><path d="M0 3.5 L2.5 0.5 L5 3.5Z M0 5.5 L2.5 8.5 L5 5.5Z" fill="#AFB1B3"/></svg>
<div class="t" style="left:1572px;top:1033px;transform-origin:0 0;transform:scaleX(0.9118);">UTF-8</div>
<svg style="left:1605px;top:1036px" width="5" height="9" viewBox="0 0 5 9"><path d="M0 3.5 L2.5 0.5 L5 3.5Z M0 5.5 L2.5 8.5 L5 5.5Z" fill="#AFB1B3"/></svg>
<div class="t" style="left:1620px;top:1034px;transform-origin:0 0;transform:scaleX(0.9704);">Git: experimental</div>
<svg style="left:1712px;top:1036px" width="5" height="9" viewBox="0 0 5 9"><path d="M0 3.5 L2.5 0.5 L5 3.5Z M0 5.5 L2.5 8.5 L5 5.5Z" fill="#AFB1B3"/></svg>
<div class="t" style="left:1731px;top:1033px;color:#8C8C8C;transform-origin:0 0;transform:scaleX(0.9968);">Context: &lt;no context&gt;</div>
<svg style="left:1876px;top:1034px" width="10" height="11" viewBox="0 0 10 11"><rect x="1" y="5" width="8" height="6" fill="#7A7D7F"/><path d="M3 5 V3 A2 2 0 0 1 7 3" stroke="#7A7D7F" stroke-width="1.2" fill="none"/></svg>
<svg style="left:1898px;top:1033px" width="12" height="13" viewBox="0 0 12 13"><circle cx="6" cy="5" r="4" fill="none" stroke="#7A7D7F" stroke-width="1.3"/><path d="M1 13 V10 H11 V13" stroke="#7A7D7F" stroke-width="1.3" fill="none"/></svg>
<div class="a" style="left:0;top:1050px;width:1920px;height:30px;background:#0F0A0E"></div>
<svg style="left:10px;top:1057px" width="16" height="16" viewBox="0 0 16 16"><path d="M0 2.3 L6.5 1.4 V7.5 H0Z M7.3 1.3 L16 0 V7.5 H7.3Z M0 8.4 H6.5 V14.6 L0 13.7Z M7.3 8.4 H16 V16 L7.3 14.7Z" fill="#FFFFFF"/></svg>
<div class="a" style="left:43px;top:1078px;width:152px;height:2px;background:#F5BE98"></div>
<div class="t" style="left:67px;top:1058px;color:#FFFFFF;font-size:12.5px;transform-origin:0 0;transform:scaleX(0.9727);">OpenVK // Mobile Ap...</div>
<div class="a" style="left:204px;top:1078px;width:152px;height:2px;background:#F5BE98"></div>
<div class="t" style="left:228px;top:1058px;color:#FFFFFF;font-size:12.5px;transform-origin:0 0;transform:scaleX(0.9292);">Главная — Mozilla Fi...</div>
<div class="a" style="left:365px;top:1078px;width:152px;height:2px;background:#F5BE98"></div>
<div class="t" style="left:389px;top:1058px;color:#FFFFFF;font-size:12.5px;transform-origin:0 0;transform:scaleX(0.9623);">Android Emulator - A...</div>
<div class="a" style="left:526px;top:1078px;width:152px;height:2px;background:#F5BE98"></div>
<div class="t" style="left:550px;top:1058px;color:#FFFFFF;font-size:12.5px;transform-origin:0 0;transform:scaleX(0.9054);">WebOne @ TINELIX-...</div>
<div class="a" style="left:687px;top:1078px;width:152px;height:2px;background:#F5BE98"></div>
<div class="t" style="left:711px;top:1058px;color:#FFFFFF;font-size:12.5px;transform-origin:0 0;transform:scaleX(0.9520);">GitHub Desktop</div>
<div class="a" style="left:844px;top:1050px;width:160px;height:30px;background:#3A3639"></div>
<div class="a" style="left:844px;top:1078px;width:160px;height:2px;background:#F5BE98"></div>
<div class="t" style="left:872px;top:1058px;color:#FFFFFF;font-size:12.5px;transform-origin:0 0;transform:scaleX(0.9844);">mobile-android-lega...</div>
<svg style="left:47px;top:1058px" width="16" height="16" viewBox="0 0 16 16"><circle cx="8" cy="8" r="7.5" fill="#3D9BE0"/><rect x="6" y="8" width="10" height="8" rx="1" fill="#E0393E"/><text x="11" y="15" font-family="Liberation Sans" font-size="6" fill="#fff" text-anchor="middle">8</text></svg>
<svg style="left:207px;top:1057px" width="16" height="17" viewBox="0 0 16 17"><circle cx="8" cy="9" r="7.5" fill="#FF7139"/><circle cx="8" cy="9" r="4.5" fill="#8A3FE0"/><path d="M4 2 Q8 0 12 4 Q8 3 5 5Z" fill="#FFBD3F"/></svg>
<svg style="left:369px;top:1058px" width="16" height="16" viewBox="0 0 16 16"><circle cx="8" cy="8" r="7.5" fill="#EFEFEF"/><rect x="5" y="3" width="6" height="10" rx="1" fill="#3D9BE0"/><rect x="6" y="4" width="4" height="8" fill="#62B543"/></svg>
<svg style="left:529px;top:1058px" width="16" height="14" viewBox="0 0 16 14"><rect x="0" y="1" width="16" height="12" fill="#DCDCDC"/><rect x="1.5" y="2.5" width="4" height="9" fill="#3D9BE0"/><rect x="6" y="4" width="4" height="7.5" fill="#62B543"/><rect x="11" y="3" width="3.5" height="8.5" fill="#777"/></svg>
<svg style="left:691px;top:1057px" width="16" height="16" viewBox="0 0 16 16"><circle cx="8" cy="8" r="7.5" fill="#8B59D6"/><circle cx="8" cy="8" r="5" fill="#fff"/><path d="M5.5 13 V10.5 Q4 10 4 7.5 Q4 5 6 4.5 L6.5 3.5 L7.5 4.5 H8.5 L9.5 3.5 L10 4.5 Q12 5 12 7.5 Q12 10 10.5 10.5 V13Z" fill="#8B59D6"/></svg>
<svg style="left:852px;top:1057px" width="16.0" height="18.0" viewBox="0 0 16 18"><circle cx="8" cy="7.5" r="7" fill="#86C147"/><path d="M8 4.5 L3.2 16.5 M8 4.5 L12.8 16.5" stroke="#F2F2F2" stroke-width="1.8" stroke-linecap="round"/><path d="M5 12 Q8 13.5 11 12" stroke="#F2F2F2" stroke-width="1.2" fill="none"/><circle cx="8" cy="5.3" r="1.9" fill="#3E4A3A"/></svg>
<div class="t" style="left:1779px;top:1056px;color:#fff;font-size:12px">EN</div>
<svg style="left:1810px;top:1060px" width="11" height="7" viewBox="0 0 11 7"><path d="M0.5 6.5 L5.5 1 L10.5 6.5" stroke="#fff" stroke-width="1.3" fill="none"/></svg>
<svg style="left:1832px;top:1057px" width="16" height="15" viewBox="0 0 16 15"><path d="M1 5 H4 L8 1.5 V13.5 L4 10 H1Z" fill="none" stroke="#fff" stroke-width="1.1"/><path d="M10.5 5 Q12 7.5 10.5 10 M12.5 3 Q15 7.5 12.5 12" stroke="#fff" stroke-width="1.1" fill="none"/></svg>
<svg style="left:1858px;top:1057px" width="16" height="15" viewBox="0 0 16 15"><path d="M1 7 A10 10 0 0 1 15 6 M3 9.5 A7 7 0 0 1 13.5 9 M5.5 12 A4 4 0 0 1 12 11.5" stroke="#fff" stroke-width="1.2" fill="none"/><circle cx="13" cy="13" r="1.5" fill="#fff"/></svg>
<div class="t" style="left:1882px;top:1058px;color:#fff;font-size:12.5px;letter-spacing:-0.6px">21:30</div>
<div class="a" style="left:1916px;top:1050px;width:1px;height:30px;background:#555"></div>
</body></html>
